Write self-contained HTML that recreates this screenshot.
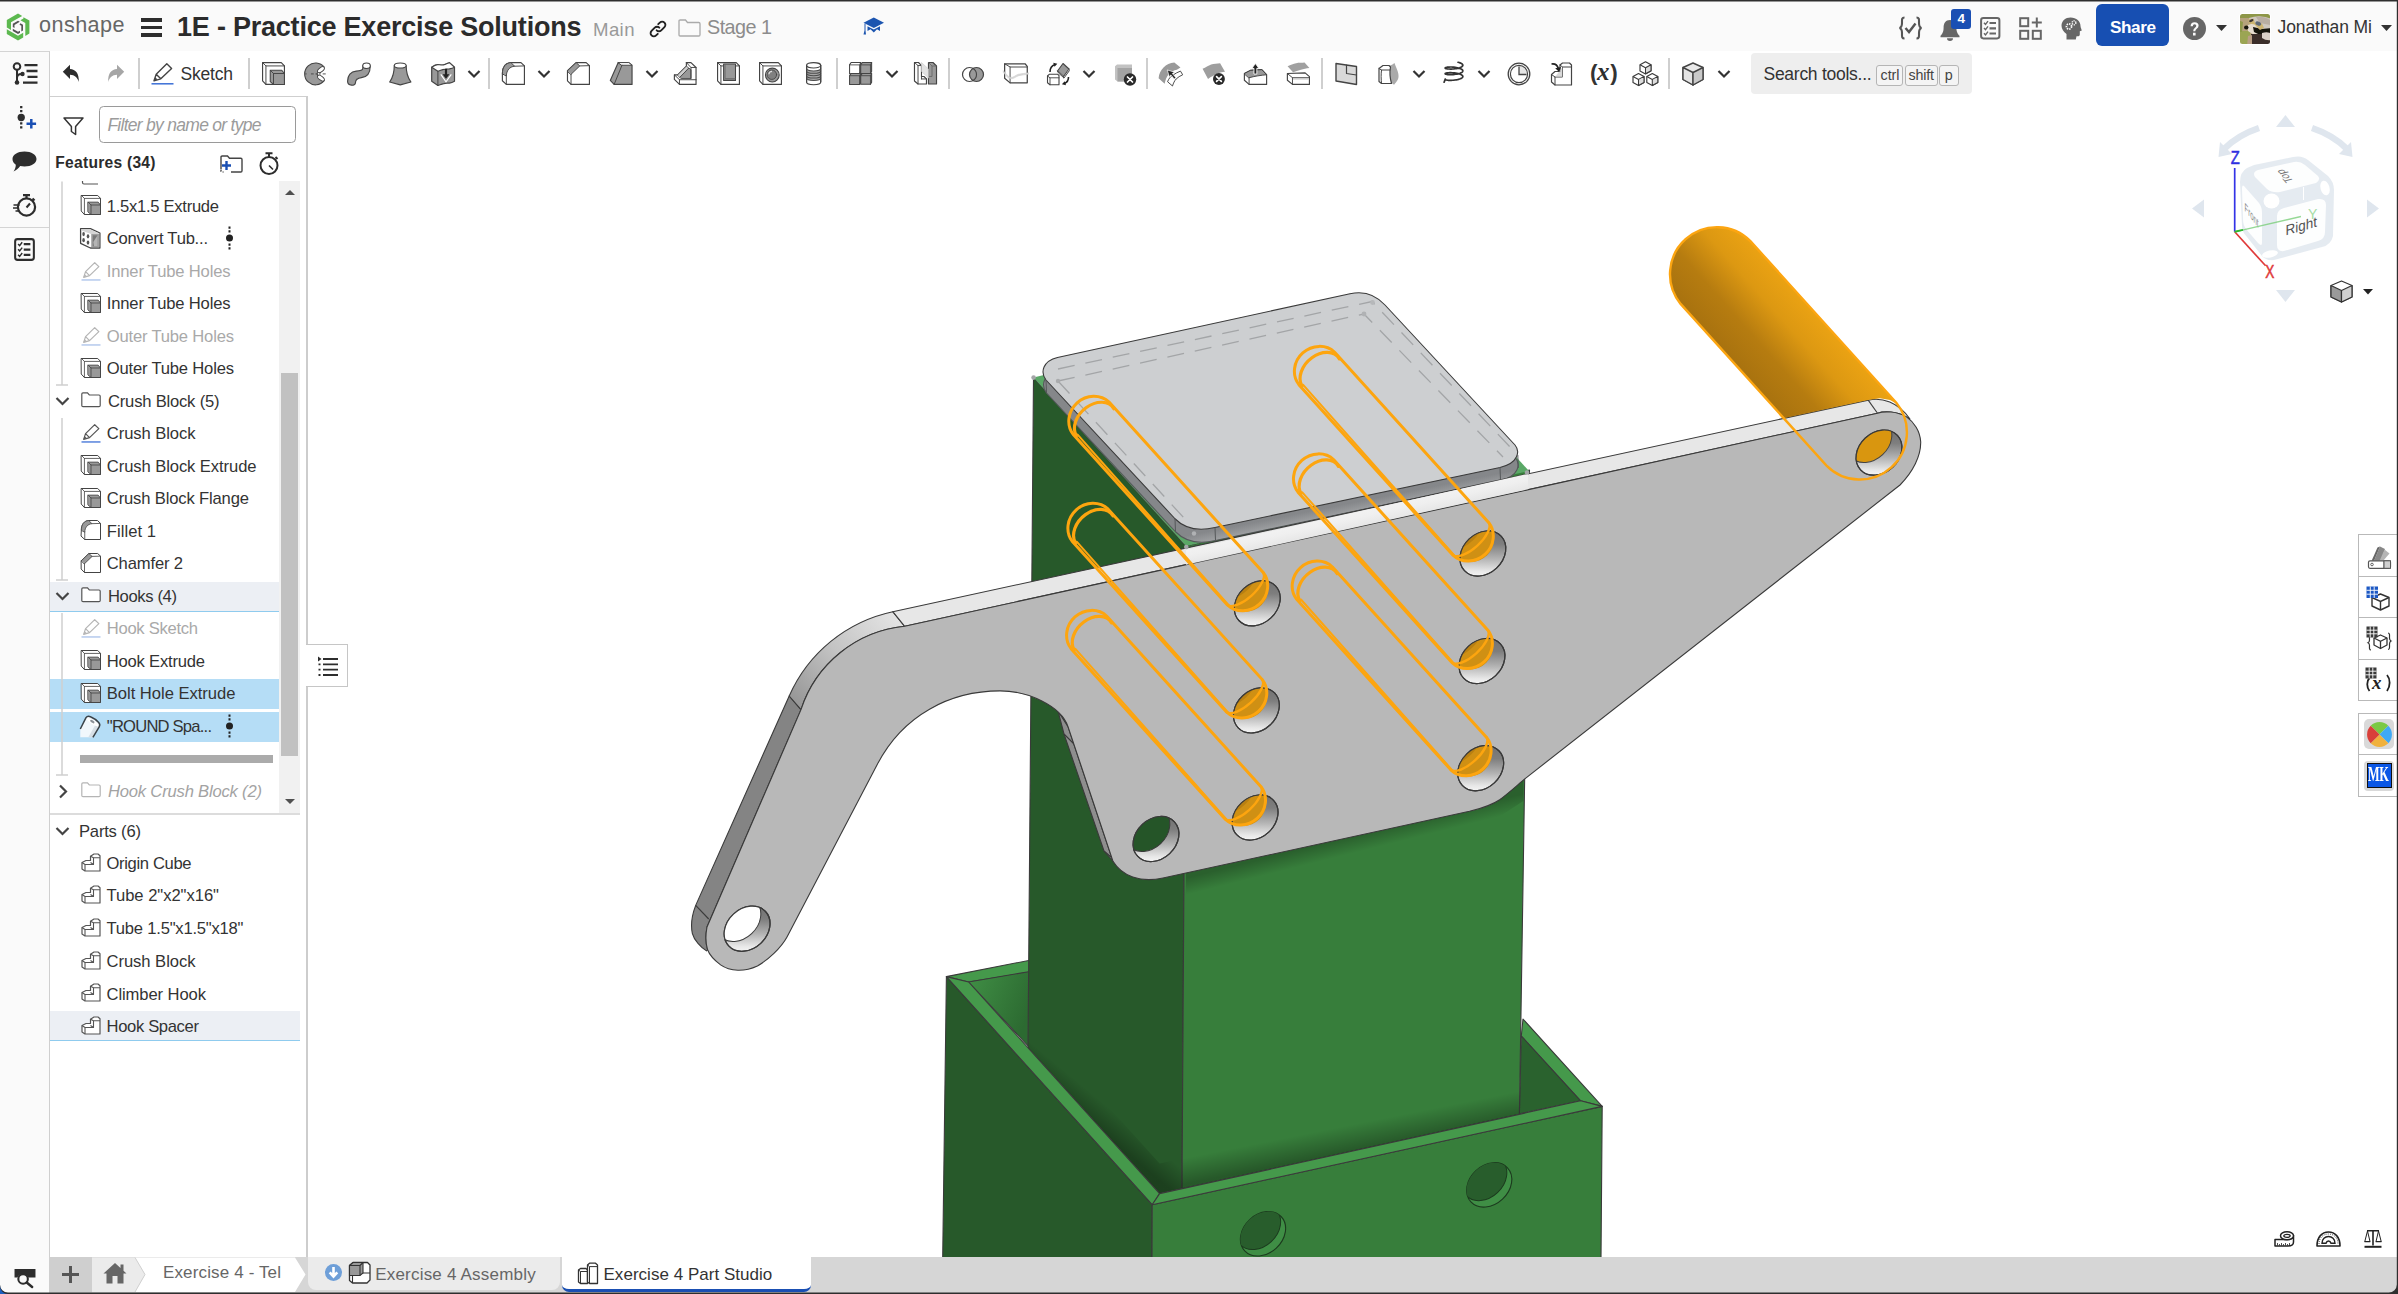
<!DOCTYPE html>
<html lang="en"><head><meta charset="utf-8"><title>1E - Practice Exercise Solutions | Exercise 4 Part Studio</title>
<style>
html,body{margin:0;padding:0}
body{width:2398px;height:1294px;overflow:hidden;background:#fff;position:relative;font-family:"Liberation Sans",sans-serif;color:#333}
.abs{position:absolute}
#hdr{left:0;top:0;width:2398px;height:51px;background:#fafafa}
#rail{left:0;top:51px;width:49px;height:1243px;background:#fafafa;border-right:1.5px solid #cfcfcf;border-top:1.5px solid #d4d4d4;box-sizing:content-box}
#tabbar{left:50px;top:1256.5px;width:2348px;height:36.5px;background:#d6d6d6}
#panel{left:50px;top:96px;width:255.5px;height:1160px;border-top:1.5px solid #cfcfcf;border-right:2px solid #cdcdcd;background:#fff}
#frame{left:0;top:0;width:2398px;height:1294px;pointer-events:none}
svg{position:absolute;left:0;top:0;overflow:visible}

.t{position:absolute;white-space:nowrap;display:block}
.ic{position:absolute;overflow:visible}
.box{position:absolute;box-sizing:border-box}
</style></head><body>
<svg id="model" width="2398" height="1294" viewBox="0 0 2398 1294">
<defs>
<linearGradient id="gcyl" gradientUnits="userSpaceOnUse" x1="1682" y1="305" x2="1752" y2="243"><stop offset="0" stop-color="#a8720f"/><stop offset=".35" stop-color="#b67c10"/><stop offset=".7" stop-color="#dc9812"/><stop offset="1" stop-color="#eaa213"/></linearGradient>
<linearGradient id="ghole" x1="1" y1="0.25" x2="0.15" y2="0.95"><stop offset="0" stop-color="#707070"/><stop offset=".3" stop-color="#7e7e7e"/><stop offset=".6" stop-color="#b4b4b4"/><stop offset=".85" stop-color="#e8e8e8"/><stop offset="1" stop-color="#fbfbfb"/></linearGradient>
<linearGradient id="gside" gradientUnits="userSpaceOnUse" x1="1300" y1="500" x2="1304" y2="520"><stop offset="0" stop-color="#85878a"/><stop offset="1" stop-color="#b9bbbd"/></linearGradient>
<linearGradient id="garc" gradientUnits="userSpaceOnUse" x1="890" y1="615" x2="795" y2="700"><stop offset="0" stop-color="#e2e2e2"/><stop offset=".5" stop-color="#c4c4c4"/><stop offset="1" stop-color="#989898"/></linearGradient>
<linearGradient id="gend" gradientUnits="userSpaceOnUse" x1="1875" y1="402" x2="1915" y2="460"><stop offset="0" stop-color="#ececec"/><stop offset=".5" stop-color="#cfcfcf"/><stop offset="1" stop-color="#9c9c9c"/></linearGradient>
<linearGradient id="gstrip" gradientUnits="userSpaceOnUse" x1="1180" y1="548" x2="1184" y2="566"><stop offset="0" stop-color="#f3f3f3"/><stop offset=".5" stop-color="#efefef"/><stop offset="1" stop-color="#e6e6e6"/></linearGradient>
<linearGradient id="ginl" gradientUnits="userSpaceOnUse" x1="968" y1="985" x2="1030" y2="1010"><stop offset="0" stop-color="#3f8d44"/><stop offset="1" stop-color="#2c6a31"/></linearGradient>
<linearGradient id="gao1" gradientUnits="userSpaceOnUse" x1="1100" y1="1100" x2="1085" y2="1118"><stop offset="0" stop-color="#000" stop-opacity="0"/><stop offset="1" stop-color="#000" stop-opacity=".28"/></linearGradient>
<linearGradient id="gao2" gradientUnits="userSpaceOnUse" x1="1350" y1="1125" x2="1355" y2="1150"><stop offset="0" stop-color="#000" stop-opacity="0"/><stop offset="1" stop-color="#000" stop-opacity=".3"/></linearGradient>
<linearGradient id="gao3" gradientUnits="userSpaceOnUse" x1="1300" y1="870" x2="1295" y2="845"><stop offset="0" stop-color="#000" stop-opacity="0"/><stop offset="1" stop-color="#000" stop-opacity=".25"/></linearGradient>
<linearGradient id="gsh1" gradientUnits="userSpaceOnUse" x1="1330" y1="842" x2="1334" y2="858"><stop offset="0" stop-color="#000" stop-opacity=".24"/><stop offset="1" stop-color="#000" stop-opacity="0"/></linearGradient>
<linearGradient id="gsh2" gradientUnits="userSpaceOnUse" x1="1085" y1="790" x2="1066" y2="797"><stop offset="0" stop-color="#000" stop-opacity=".28"/><stop offset="1" stop-color="#000" stop-opacity="0"/></linearGradient>
</defs>
<g stroke="#3a3a3a" stroke-width="1.1" stroke-linejoin="round">
<polygon points="946.4,976.6 1030.0,960.2 1030.0,972.0 968.6,982.0" fill="#45994b"/>
<polygon points="968.6,982.0 1030.0,971.5 1030.0,1048.0" fill="url(#ginl)"/>
<polygon points="1523.0,1019.0 1602.2,1106.4 1580.6,1100.8 1521.3,1036.0" fill="#45994b"/>
<polygon points="1521.3,1036.0 1580.6,1100.8 1519.4,1113.8" fill="#2a622e"/>
<polygon points="1033.5,377.5 1186.0,546.0 1182.0,1188.7 1159.6,1193.6 1028.0,1047.8" fill="#27592a"/>
<polygon points="1186.0,546.0 1529.5,470.0 1519.4,1114.3 1182.0,1188.7" fill="#377e3b"/>
</g>
<polygon points="1028.0,1017.8 1159.6,1163.6 1182.0,1158.7 1182.0,1188.7 1159.6,1193.6 1028.0,1047.8" fill="url(#gao1)"/>
<polygon points="1182.0,1158.7 1519.6,1084.0 1519.4,1114.3 1182.0,1188.7" fill="url(#gao2)"/>
<g stroke="#3a3a3a" stroke-width="1.1" stroke-linejoin="round">
<polygon points="946.4,976.6 1152.2,1204.7 1152.0,1258.0 942.7,1258.0" fill="#27592a"/>
<polygon points="1152.2,1204.7 1602.2,1106.4 1601.0,1258.0 1152.0,1258.0" fill="#377e3b"/>
<polygon points="946.4,976.6 968.6,982.0 1159.6,1193.6 1152.2,1204.7" fill="#45994b"/>
<polygon points="1152.2,1204.7 1159.6,1193.6 1580.6,1100.8 1602.2,1106.4" fill="#45994b"/>
<clipPath id="oh0"><ellipse cx="1263.0" cy="1233.8" rx="25" ry="19.5" transform="rotate(-43 1263.0 1233.8)"/></clipPath>
<ellipse cx="1263.0" cy="1233.8" rx="25" ry="19.5" transform="rotate(-43 1263.0 1233.8)" fill="#3f8e45" stroke="#1c3a1e" stroke-width="1.1"/>
<g clip-path="url(#oh0)"><ellipse cx="1258.0" cy="1227.3" rx="25" ry="19.5" transform="rotate(-43 1258.0 1227.3)" fill="#285d2c" stroke="#1c3a1e" stroke-width="1"/></g>
<clipPath id="oh1"><ellipse cx="1489.2" cy="1184.9" rx="25" ry="19.5" transform="rotate(-43 1489.2 1184.9)"/></clipPath>
<ellipse cx="1489.2" cy="1184.9" rx="25" ry="19.5" transform="rotate(-43 1489.2 1184.9)" fill="#3f8e45" stroke="#1c3a1e" stroke-width="1.1"/>
<g clip-path="url(#oh1)"><ellipse cx="1484.2" cy="1178.4" rx="25" ry="19.5" transform="rotate(-43 1484.2 1178.4)" fill="#285d2c" stroke="#1c3a1e" stroke-width="1"/></g>
</g>
<polygon points="1186.0,871.0 1469.5,809.3 1499.7,797.7 1523.5,778.0 1523.3,801.0 1476.0,832.0 1186.0,896.0" fill="url(#gsh1)"/>
<g stroke="#3a3a3a" stroke-width="1.1" stroke-linejoin="round">
<polygon points="1033.5,377.5 1186,546 1529,471 1370,297" fill="#5aa866" stroke="none"/>
<path d="M1057.5,357.5 L1350,293.75 C1362,291 1375,294 1385,305 L1515,445 C1520,451 1519,463 1500,467.5 L1215,527.5 C1200,531 1186,530 1175,518.75 L1046,380 C1040,372 1043,361 1057.5,357.5Z" transform="translate(0.5,13)" fill="url(#gside)" stroke="#55585a"/>
<path d="M1057.5,357.5 L1350,293.75 C1362,291 1375,294 1385,305 L1515,445 C1520,451 1519,463 1500,467.5 L1215,527.5 C1200,531 1186,530 1175,518.75 L1046,380 C1040,372 1043,361 1057.5,357.5Z" fill="#cdcfd1"/>
</g>
<g stroke="#55585a" stroke-width="1" fill="none"><path d="M1175,518.75 l.5,13 M1215,527.5 l.5,13 M1500,467.5 l.5,13 M1517.8,455 l.5,13 M1046,380 l.5,13"/></g>
<g stroke="#a3a5a7" stroke-width="1.3" fill="none" stroke-dasharray="17 11"><path d="M1058,381 L1364,314 L1503,457"/><path d="M1058,381 L1184,518"/><path d="M1058,369 L1372,301.5 L1512,449"/></g>
<circle cx="1058" cy="381" r="2.2" fill="#a9abad"/><circle cx="1364" cy="314" r="2.4" fill="#b0b2b4"/><circle cx="1372.5" cy="302.5" r="2.4" fill="#b6b8ba"/>
<g stroke="#3a3a3a" stroke-width="1.1" stroke-linejoin="round">
<polygon points="1058.0,711.0 1064.0,734.0 1104.0,851.0 1116.0,864.5 1113.0,861.3 1068.0,726.6" fill="#8e8e8e"/>
<path d="M1064,734 L1074,744 M1104,851 L1111,857" fill="none"/>
<path d="M789.2,696 L801,709.6 L707,927 C705.5,935 705.5,943 707.6,949.8 L706.5,950.9 C701,947.6 694,940 692.4,933.6 C690.5,925 692,915 695.7,905.4Z" fill="#848484"/>
<path d="M695.7,905.4 L708.7,919" fill="none"/>
<path d="M892.8,611.7 A146.7,146.7 0 0 0 789.2,696 L801,709.6 A121.8,121.8 0 0 1 904.7,626.3Z" fill="url(#garc)"/>
<path d="M892.8,611.7 L1868.2,400.1 C1882,397 1898,402 1910,419 L1906.8,417.1 C1897,411 1884,411 1877.5,413.2 L904.7,626.3Z" fill="#e7e7e7"/>
<path d="M1868.2,400.1 L1877.5,413.2" fill="none"/>
<path d="M904.7,626.3 L1877.5,413.2 C1884,411 1897,411 1906.8,417.1 C1914,422 1920,431 1920.7,441.8 C1921,456 1913,472 1900,485 L1524.5,779.1 C1518,784.5 1509,793 1499.7,799.7 C1491,805.5 1481,808.5 1469.5,811.3 L1163,878 C1140,883 1122,876 1113,861.3 L1068,726.6 C1061,705.7 1028,690.9 1000,690.9 C950,690.9 902.9,715.2 877.5,764 L787,937 C781,948 768,960 757.4,966 C751,969 745,970.5 737.9,970.3 C731,970 725,968 720.6,964.9 C714,960 709.5,955 707.6,949.8 C705.5,943 705.5,935 707,927 L801,709.6 A121.8,121.8 0 0 1 904.7,626.3Z" fill="#b8b8b8"/>
</g>
<polygon points="1186.0,550.1 1528.0,473.9 1528.0,489.2 1186.0,564.7" fill="url(#gstrip)"/>
<g fill="#a4a6a8"><circle cx="1033.6" cy="377.6" r="2.3"/><circle cx="1186.3" cy="547" r="2.3"/><circle cx="1527" cy="472.5" r="2.3"/><circle cx="1194" cy="533.5" r="2.2" fill="#b0b2b4"/></g>
<defs>
<clipPath id="hc0"><ellipse cx="1257.3" cy="603.3" rx="25.2" ry="20" transform="rotate(-43 1257.3 603.3)"/></clipPath>
<clipPath id="hc1"><ellipse cx="1256.4" cy="710.4" rx="25.2" ry="20" transform="rotate(-43 1256.4 710.4)"/></clipPath>
<clipPath id="hc2"><ellipse cx="1255.1" cy="817.5" rx="25.2" ry="20" transform="rotate(-43 1255.1 817.5)"/></clipPath>
<clipPath id="hc3"><ellipse cx="1482.9" cy="553.5" rx="25.2" ry="20" transform="rotate(-43 1482.9 553.5)"/></clipPath>
<clipPath id="hc4"><ellipse cx="1482.0" cy="661.0" rx="25.2" ry="20" transform="rotate(-43 1482.0 661.0)"/></clipPath>
<clipPath id="hc5"><ellipse cx="1480.7" cy="768.2" rx="25.2" ry="20" transform="rotate(-43 1480.7 768.2)"/></clipPath>
<clipPath id="hc6"><ellipse cx="1156.0" cy="839.0" rx="25.2" ry="20" transform="rotate(-43 1156.0 839.0)"/></clipPath>
<clipPath id="hc7"><ellipse cx="747.1" cy="928.7" rx="25.2" ry="20" transform="rotate(-43 747.1 928.7)"/></clipPath>
<clipPath id="hc8"><ellipse cx="1879.0" cy="452.6" rx="25.2" ry="20" transform="rotate(-43 1879.0 452.6)"/></clipPath>
</defs>
<g><ellipse cx="1257.3" cy="603.3" rx="25.2" ry="20" transform="rotate(-43 1257.3 603.3)" fill="url(#ghole)" stroke="#3a3a3a" stroke-width="1.2"/><g clip-path="url(#hc0)"><circle cx="1245.3" cy="588.7" r="23" fill="#cf9014"/><ellipse cx="1238.3" cy="580.7" rx="24" ry="13" transform="rotate(-43 1238.3 580.7)" fill="#b98012"/></g><ellipse cx="1257.3" cy="603.3" rx="25.2" ry="20" transform="rotate(-43 1257.3 603.3)" fill="none" stroke="#3a3a3a" stroke-width="1.2"/></g>
<g><ellipse cx="1256.4" cy="710.4" rx="25.2" ry="20" transform="rotate(-43 1256.4 710.4)" fill="url(#ghole)" stroke="#3a3a3a" stroke-width="1.2"/><g clip-path="url(#hc1)"><circle cx="1244.4" cy="695.8" r="23" fill="#cf9014"/><ellipse cx="1237.4" cy="687.8" rx="24" ry="13" transform="rotate(-43 1237.4 687.8)" fill="#b98012"/></g><ellipse cx="1256.4" cy="710.4" rx="25.2" ry="20" transform="rotate(-43 1256.4 710.4)" fill="none" stroke="#3a3a3a" stroke-width="1.2"/></g>
<g><ellipse cx="1255.1" cy="817.5" rx="25.2" ry="20" transform="rotate(-43 1255.1 817.5)" fill="url(#ghole)" stroke="#3a3a3a" stroke-width="1.2"/><g clip-path="url(#hc2)"><circle cx="1243.1" cy="802.9" r="23" fill="#cf9014"/><ellipse cx="1236.1" cy="794.9" rx="24" ry="13" transform="rotate(-43 1236.1 794.9)" fill="#b98012"/></g><ellipse cx="1255.1" cy="817.5" rx="25.2" ry="20" transform="rotate(-43 1255.1 817.5)" fill="none" stroke="#3a3a3a" stroke-width="1.2"/></g>
<g><ellipse cx="1482.9" cy="553.5" rx="25.2" ry="20" transform="rotate(-43 1482.9 553.5)" fill="url(#ghole)" stroke="#3a3a3a" stroke-width="1.2"/><g clip-path="url(#hc3)"><circle cx="1470.9" cy="538.9" r="23" fill="#cf9014"/><ellipse cx="1463.9" cy="530.9" rx="24" ry="13" transform="rotate(-43 1463.9 530.9)" fill="#b98012"/></g><ellipse cx="1482.9" cy="553.5" rx="25.2" ry="20" transform="rotate(-43 1482.9 553.5)" fill="none" stroke="#3a3a3a" stroke-width="1.2"/></g>
<g><ellipse cx="1482.0" cy="661.0" rx="25.2" ry="20" transform="rotate(-43 1482.0 661.0)" fill="url(#ghole)" stroke="#3a3a3a" stroke-width="1.2"/><g clip-path="url(#hc4)"><circle cx="1470.0" cy="646.4" r="23" fill="#cf9014"/><ellipse cx="1463.0" cy="638.4" rx="24" ry="13" transform="rotate(-43 1463.0 638.4)" fill="#b98012"/></g><ellipse cx="1482.0" cy="661.0" rx="25.2" ry="20" transform="rotate(-43 1482.0 661.0)" fill="none" stroke="#3a3a3a" stroke-width="1.2"/></g>
<g><ellipse cx="1480.7" cy="768.2" rx="25.2" ry="20" transform="rotate(-43 1480.7 768.2)" fill="url(#ghole)" stroke="#3a3a3a" stroke-width="1.2"/><g clip-path="url(#hc5)"><circle cx="1468.7" cy="753.6" r="23" fill="#cf9014"/><ellipse cx="1461.7" cy="745.6" rx="24" ry="13" transform="rotate(-43 1461.7 745.6)" fill="#b98012"/></g><ellipse cx="1480.7" cy="768.2" rx="25.2" ry="20" transform="rotate(-43 1480.7 768.2)" fill="none" stroke="#3a3a3a" stroke-width="1.2"/></g>
<g><ellipse cx="1156.0" cy="839.0" rx="25.2" ry="20" transform="rotate(-43 1156.0 839.0)" fill="url(#ghole)" stroke="#3a3a3a" stroke-width="1.2"/><g clip-path="url(#hc6)"><ellipse cx="1147" cy="829" rx="25" ry="20" transform="rotate(-43 1147 829)" fill="#255528" stroke="#3a3a3a" stroke-width="1"/></g><ellipse cx="1156.0" cy="839.0" rx="25.2" ry="20" transform="rotate(-43 1156.0 839.0)" fill="none" stroke="#3a3a3a" stroke-width="1.2"/></g>
<g><ellipse cx="747.1" cy="928.7" rx="25.2" ry="20" transform="rotate(-43 747.1 928.7)" fill="url(#ghole)" stroke="#3a3a3a" stroke-width="1.2"/><g clip-path="url(#hc7)"><ellipse cx="738" cy="919" rx="25" ry="20" transform="rotate(-43 738 919)" fill="#fff" stroke="#3a3a3a" stroke-width="1"/></g><ellipse cx="747.1" cy="928.7" rx="25.2" ry="20" transform="rotate(-43 747.1 928.7)" fill="none" stroke="#3a3a3a" stroke-width="1.2"/></g>
<g><ellipse cx="1879.0" cy="452.6" rx="25.2" ry="20" transform="rotate(-43 1879.0 452.6)" fill="url(#ghole)" stroke="#3a3a3a" stroke-width="1.2"/><g clip-path="url(#hc8)"><ellipse cx="1869" cy="440" rx="25" ry="20" transform="rotate(-43 1869 440)" fill="#d9960f" stroke="#444" stroke-width="1"/></g><ellipse cx="1879.0" cy="452.6" rx="25.2" ry="20" transform="rotate(-43 1879.0 452.6)" fill="none" stroke="#3a3a3a" stroke-width="1.2"/></g>
<defs><clipPath id="cylc"><polygon points="1500.0,100.0 2100.0,100.0 2100.0,404.0 1897.0,404.0 1890.0,400.0 1880.0,398.2 1868.2,400.1 1500.0,479.5"/></clipPath></defs>
<path d="M1680.6,303.9 A47.0,47.0 0 0 1 1750.4,241.1 L1896.3,402.8 L1826.5,465.6 Z" fill="url(#gcyl)" clip-path="url(#cylc)"/>
<path d="M1680.6,303.9 A47.0,47.0 0 0 1 1750.4,241.1 L1896.3,402.8 A47.0,47.0 0 0 1 1826.5,465.6 Z" fill="none" stroke="#fca511" stroke-width="2.4"/>
<g fill="none" stroke="#fda50f" stroke-linecap="round">
<path d="M1073.3,434.5 A22.5,24.2 47.9 0 1 1109.1,402.1 L1263.2,572.5 A22.5,24.2 47.9 0 1 1227.4,604.9 Z" stroke-width="3"/>
<path d="M1076.4,435.8 A17.0,23.2 47.9 0 1 1113.8,408.7" stroke-width="3.2"/>
<path d="M1077.6,434.6 L1229.3,605.9" stroke-width="2"/>
<path d="M1263.2,572.5 A10.0,24.2 47.9 0 1 1227.4,604.9" stroke-width="2.4"/>
<path d="M1072.4,541.6 A22.5,24.2 47.9 0 1 1108.2,509.2 L1262.3,679.6 A22.5,24.2 47.9 0 1 1226.5,712.0 Z" stroke-width="3"/>
<path d="M1075.5,542.9 A17.0,23.2 47.9 0 1 1112.9,515.8" stroke-width="3.2"/>
<path d="M1076.7,541.7 L1228.4,713.0" stroke-width="2"/>
<path d="M1262.3,679.6 A10.0,24.2 47.9 0 1 1226.5,712.0" stroke-width="2.4"/>
<path d="M1071.1,648.7 A22.5,24.2 47.9 0 1 1106.9,616.3 L1261.0,786.7 A22.5,24.2 47.9 0 1 1225.2,819.1 Z" stroke-width="3"/>
<path d="M1074.2,650.0 A17.0,23.2 47.9 0 1 1111.6,622.9" stroke-width="3.2"/>
<path d="M1075.4,648.8 L1227.1,820.1" stroke-width="2"/>
<path d="M1261.0,786.7 A10.0,24.2 47.9 0 1 1225.2,819.1" stroke-width="2.4"/>
<path d="M1298.9,384.7 A22.5,24.2 47.9 0 1 1334.7,352.3 L1488.8,522.7 A22.5,24.2 47.9 0 1 1453.0,555.1 Z" stroke-width="3"/>
<path d="M1302.0,386.0 A17.0,23.2 47.9 0 1 1339.4,358.9" stroke-width="3.2"/>
<path d="M1303.2,384.8 L1454.9,556.1" stroke-width="2"/>
<path d="M1488.8,522.7 A10.0,24.2 47.9 0 1 1453.0,555.1" stroke-width="2.4"/>
<path d="M1298.0,492.2 A22.5,24.2 47.9 0 1 1333.8,459.8 L1487.9,630.2 A22.5,24.2 47.9 0 1 1452.1,662.6 Z" stroke-width="3"/>
<path d="M1301.1,493.5 A17.0,23.2 47.9 0 1 1338.5,466.4" stroke-width="3.2"/>
<path d="M1302.3,492.3 L1454.0,663.6" stroke-width="2"/>
<path d="M1487.9,630.2 A10.0,24.2 47.9 0 1 1452.1,662.6" stroke-width="2.4"/>
<path d="M1296.7,599.4 A22.5,24.2 47.9 0 1 1332.5,567.0 L1486.6,737.4 A22.5,24.2 47.9 0 1 1450.8,769.8 Z" stroke-width="3"/>
<path d="M1299.8,600.7 A17.0,23.2 47.9 0 1 1337.2,573.6" stroke-width="3.2"/>
<path d="M1301.0,599.5 L1452.7,770.8" stroke-width="2"/>
<path d="M1486.6,737.4 A10.0,24.2 47.9 0 1 1450.8,769.8" stroke-width="2.4"/>
</g>
</svg>
<div id="hdr" class="abs"></div>
<div id="rail" class="abs"></div>
<div id="panel" class="abs"></div>
<div id="tabbar" class="abs"></div>
<svg class="ic" style="left:4.9px;top:12.5px" width="26.0" height="28.0" viewBox="0 0 24 28" ><g fill="#5cb84f"><path d="M12,0.5 L16.2,2.9 L5,9.3 L5,17 L0.8,14.6 L0.8,7Z"/><path d="M17.4,4.2 L23.4,7.6 L23.4,20.6 L19.3,23 L19.3,10 L14.4,7.2 L17.4,5.5Z"/><path d="M0.8,16.2 L12,22.7 L17.2,19.7 L17.2,24.4 L12,27.4 L0.8,21Z"/></g><g fill="#555"><path d="M12,7.7 L13.8,8.8 L8.5,11.9 L8.5,15 L6.8,14 L6.8,10.8Z"/><path d="M14.4,10.2 L17,11.7 L17,17.6 L15.3,18.6 L15.3,12.8 L13.5,11.8Z"/><path d="M6.8,15.8 L12,18.8 L14,17.7 L14,19.8 L12,21 L6.8,18Z"/></g></svg>
<span id="t1" class="t" style="left:39.0px;top:10.8px;font-size:21.6px;line-height:27px;color:#666;font-weight:normal;font-style:normal;letter-spacing:0.440px;">onshape</span>
<div class="box" style="left:141px;top:18.3px;width:21px;height:3.6px;background:#2d2d2d"></div><div class="box" style="left:141px;top:25.8px;width:21px;height:3.6px;background:#2d2d2d"></div><div class="box" style="left:141px;top:33.3px;width:21px;height:3.6px;background:#2d2d2d"></div>
<span id="t2" class="t" style="left:177.0px;top:9.6px;font-size:27.0px;line-height:34px;color:#2b2b2b;font-weight:bold;font-style:normal;letter-spacing:-0.216px;">1E - Practice Exercise Solutions</span>
<span id="t3" class="t" style="left:593.0px;top:17.9px;font-size:18.6px;line-height:23px;color:#999;font-weight:normal;font-style:normal;letter-spacing:0.396px;">Main</span>
<svg class="ic" style="left:648.5px;top:19.5px" width="18.0" height="18.0" viewBox="0 0 24 24" ><g fill="none" stroke="#222" stroke-width="2.5" stroke-linecap="round"><path d="M10.2,13.8 a4.3,4.3 0 0 0 6.1,0 l4.3,-4.3 a4.3,4.3 0 0 0 -6.1,-6.1 l-2.2,2.2"/><path d="M13.8,10.2 a4.3,4.3 0 0 0 -6.1,0 l-4.3,4.3 a4.3,4.3 0 0 0 6.1,6.1 l2.2,-2.2"/></g></svg>
<svg class="ic" style="left:677.5px;top:18.5px" width="23.0" height="18.0" viewBox="0 0 23 18" ><path d="M1,2.2 Q1,1 2.2,1 L7.5,1 L9.5,3.5 L20.8,3.5 Q22,3.5 22,4.7 L22,15.8 Q22,17 20.8,17 L2.2,17 Q1,17 1,15.8Z" fill="none" stroke="#aaa" stroke-width="1.3"/></svg>
<span id="t4" class="t" style="left:707.0px;top:14.8px;font-size:19.8px;line-height:25px;color:#8c8c8c;font-weight:normal;font-style:normal;letter-spacing:-0.534px;">Stage 1</span>
<svg class="ic" style="left:862.5px;top:17.0px" width="21.0" height="18.0" viewBox="0 0 21 18" ><path d="M10.8,0.5 L21,5.8 L10.8,11 L0.5,5.8Z" fill="#1c55b0"/><path d="M4.5,9.3 L10.8,12.6 L17,9.3 V14 L14,12.2 L10.8,15.5 L7.5,12.2 L4.5,14Z" fill="#1c55b0"/><path d="M1.5,6.5 V13.5 L0.5,17.5 H3 L2.5,13.5 V7Z" fill="#1c55b0"/></svg>
<svg class="ic" style="left:1898.0px;top:16.0px" width="25.0" height="24.0" viewBox="0 0 25 24" ><path d="M6.5,1.5 C3.5,1.5 4,4 4,7 C4,10 3.5,11.5 1.5,12 C3.5,12.5 4,14 4,17 C4,20 3.5,22.5 6.5,22.5 M18.5,1.5 C21.5,1.5 21,4 21,7 C21,10 21.5,11.5 23.5,12 C21.5,12.5 21,14 21,17 C21,20 21.5,22.5 18.5,22.5" fill="none" stroke="#555" stroke-width="2.1"/><path d="M7.5,12 L11,16 L17.5,7.5" fill="none" stroke="#555" stroke-width="2.4"/></svg>
<svg class="ic" style="left:1940.0px;top:18.5px" width="20.0" height="22.0" viewBox="0 0 20 22" ><path d="M10,1 C5.5,1 3.6,4.5 3.6,8.5 C3.6,13.5 2,15 0.5,16.8 V18.2 H19.5 V16.8 C18,15 16.4,13.5 16.4,8.5 C16.4,4.5 14.5,1 10,1Z M7,19.3 A3,2.6 0 0 0 13,19.3Z" fill="#666"/></svg>
<div class="box" style="left:1951px;top:9px;width:20px;height:19.6px;background:#1a4fb3;border-radius:3px"></div>
<span id="t5" class="t" style="left:1957.5px;top:10.3px;font-size:13.5px;line-height:17px;color:#fff;font-weight:bold;font-style:normal;letter-spacing:0.000px;">4</span>
<svg class="ic" style="left:1980.0px;top:17.4px" width="20.5" height="22.5" viewBox="0 0 20.5 22.5" ><rect x="1.1" y="1.1" width="18.3" height="20.3" rx="2.3" fill="none" stroke="#666" stroke-width="2"/><path d="M9.5,6 H16 M9.5,11.3 H16 M9.5,16.5 H16" stroke="#666" stroke-width="2.2"/><path d="M4,5.8 L5.5,7.5 L8,4.2 M4,11 L5.5,12.7 L8,9.4 M4,16.3 L5.5,18 L8,14.7" fill="none" stroke="#666" stroke-width="1.4"/></svg>
<svg class="ic" style="left:2019.0px;top:17.0px" width="23.0" height="23.0" viewBox="0 0 23 23" ><g fill="none" stroke="#666" stroke-width="2"><rect x="1.2" y="1.2" width="8" height="8"/><rect x="1.2" y="13.8" width="8" height="8"/><rect x="13.8" y="13.8" width="8" height="8"/><path d="M17.8,0.5 V10.5 M12.8,5.5 H22.8"/></g></svg>
<svg class="ic" style="left:2060.5px;top:17.0px" width="21.0" height="23.0" viewBox="0 0 21 23" ><path d="M9.5,0.5 C15.5,0.5 19.5,4.5 19.5,9 C19.5,10.5 20.5,12 20.8,13.5 L18.8,14.3 V17.5 C18.8,19 17.5,19.5 15.5,19.3 L14.8,22.5 H5.5 L5.5,17 C2.5,15 0.5,12 0.5,8.8 C0.5,4 4.5,0.5 9.5,0.5Z" fill="#666"/><circle cx="8" cy="9.5" r="2.6" fill="none" stroke="#fafafa" stroke-width="1.7" stroke-dasharray="1.4 1"/><circle cx="13" cy="5.8" r="1.9" fill="none" stroke="#fafafa" stroke-width="1.4" stroke-dasharray="1.1 .8"/></svg>
<div class="box" style="left:2096px;top:4px;width:73px;height:42px;background:#174fb2;border-radius:6px"></div>
<span id="t6" class="t" style="left:2110.0px;top:15.6px;font-size:17.2px;line-height:22px;color:#fff;font-weight:bold;font-style:normal;letter-spacing:-0.445px;">Share</span>
<svg class="ic" style="left:2183.0px;top:17.0px" width="23.0" height="23.0" viewBox="0 0 23 23" ><circle cx="11.5" cy="11.5" r="11.5" fill="#666"/><path d="M7.6,9.2 Q7.6,5.2 11.6,5.2 Q15.6,5.2 15.6,8.7 Q15.6,10.8 13.5,12 Q12.3,12.8 12.3,14.2 L10.2,14.2 Q10.2,11.8 12,10.7 Q13.3,9.9 13.3,8.8 Q13.3,7.3 11.6,7.3 Q9.9,7.3 9.8,9.2Z M10,15.8 h2.6 v2.6 h-2.6Z" fill="#fafafa"/></svg>
<svg class="ic" style="left:2215.5px;top:25px" width="11" height="6" viewBox="0 0 11 6"><path d="M0,0 H11 L5.5,6Z" fill="#333"/></svg>
<div class="box" style="left:2239px;top:13px;width:32px;height:32px;background:#fff;border-radius:4px"></div>
<svg class="ic" style="left:2240px;top:14px" width="30" height="30" viewBox="0 0 30 30"><defs><clipPath id="avc"><rect width="30" height="30" rx="2.5"/></clipPath><filter id="avb" x="-10%" y="-10%" width="120%" height="120%"><feGaussianBlur stdDeviation="0.7"/></filter></defs><g clip-path="url(#avc)"><g filter="url(#avb)"><rect x="-2" y="-2" width="34" height="34" fill="#b5a27c"/><rect x="-2" y="-2" width="34" height="6" fill="#8d9647"/><path d="M-2,17 L10,17 L11,32 L-2,32Z" fill="#9ba553"/><path d="M-2,6 L3,8 L2,18 L-2,18Z" fill="#8f9a4c"/><path d="M9,4 Q20,0 32,5 L32,16 L20,16 L12,12Z" fill="#cfc8bf"/><path d="M16,3 Q24,2 30,6 L30,11 L20,9Z" fill="#b9aea2"/><path d="M8,11 L14,9 L20,14 L22,20 L14,21 L8,17Z" fill="#e6ddd0"/><ellipse cx="6.3" cy="13.5" rx="2.2" ry="2" fill="#15120f"/><path d="M13,13 L22,15 L32,14 L32,19 L20,21 L14,18Z" fill="#17130f"/><path d="M8.5,5.5 L13.5,4.5 L15,9 L22,9.5 L24,14 L20,16 L14.5,10.5 L9,9.5Z" fill="#cdb571"/><ellipse cx="11.3" cy="6.6" rx="2.3" ry="1.3" transform="rotate(-20 11.3 6.6)" fill="#3a3433"/><ellipse cx="18.3" cy="9.5" rx="3" ry="2" transform="rotate(25 18.3 9.5)" fill="#5f6a78"/><path d="M11,20 L22,20 L32,24 L32,32 L11,32Z" fill="#3b2f29"/><path d="M22,19 Q28,17 32,20 L32,26 Q26,27 22,24Z" fill="#d9d0c7"/><path d="M8,22 L12,21 L12,32 L7,32Z" fill="#b99f85"/></g></g></svg>
<span id="t7" class="t" style="left:2277.5px;top:16.4px;font-size:17.5px;line-height:22px;color:#333;font-weight:normal;font-style:normal;letter-spacing:-0.084px;">Jonathan Mi</span>
<svg class="ic" style="left:2380.5px;top:24.5px" width="11" height="6" viewBox="0 0 11 6"><path d="M0,0 H11 L5.5,6Z" fill="#333"/></svg>
<svg class="ic" style="left:62.0px;top:64.0px" width="18.0" height="19.5" viewBox="0 0 18 18" preserveAspectRatio="none"><path d="M0.8,7.2 L8,0.8 L8,4.6 C13.5,4.8 17.2,8.5 16.8,16.6 C15.4,12.6 12.8,10.2 8,10 L8,13.8Z" fill="#2d2d2d"/></svg>
<svg class="ic" style="left:106.7px;top:64.0px" width="18.0" height="19.5" viewBox="0 0 18 18" preserveAspectRatio="none"><path d="M17.2,7.2 L10,0.8 L10,4.6 C4.5,4.8 0.8,8.5 1.2,16.6 C2.6,12.6 5.2,10.2 10,10 L10,13.8Z" fill="#a6a6a6"/></svg>
<div class="box" style="left:137.7px;top:57.5px;width:2px;height:31.5px;background:#cfcfcf"></div>
<svg class="ic" style="left:151.0px;top:62.7px" width="23.0" height="22.0" viewBox="0 0 23 22" ><path d="M3,17.8 L5.2,11.2 L15.8,0.8 L20.6,5.4 L9.8,15.8Z M5.2,11.2 L9.8,15.8" fill="#fff" stroke="#444" stroke-width="1.4" stroke-linejoin="round"/><path d="M3,17.8 L4.2,14.3 L6.6,16.6Z" fill="#444"/><path d="M0.5,20.8 H22.5" stroke="#3b6fd6" stroke-width="1.5"/></svg>
<span id="t8" class="t" style="left:180.4px;top:63.3px;font-size:17.5px;line-height:22px;color:#333;font-weight:normal;font-style:normal;letter-spacing:-0.180px;">Sketch</span>
<div class="box" style="left:248.2px;top:57.5px;width:2px;height:31.5px;background:#cfcfcf"></div>
<svg class="ic" style="left:261.8px;top:62.0px" width="23.0" height="23.0" viewBox="0 0 24 24" ><path d="M0.6,0.6 H20.1 L23.4,4.1 V23.4 H4.1 L0.6,19.6Z" fill="#fff" stroke="#444" stroke-width="1.2" stroke-linejoin="round" stroke-linecap="round"/><path d="M0.6,0.6 L4.1,4.1 H23.4 M4.1,4.1 V23.4" fill="none" stroke="#444" stroke-width="1" stroke-linejoin="round" stroke-linecap="round"/><path d="M8.6,8.6 H20.6 L23.4,12 V23.4 H12 L8.6,20.5Z" fill="#999" stroke="#444" stroke-width="1.1" stroke-linejoin="round" stroke-linecap="round"/><path d="M8.6,8.6 L12,12 H23.4 M12,12 V23.4" fill="none" stroke="#444" stroke-width="1" stroke-linejoin="round" stroke-linecap="round"/></svg>
<svg class="ic" style="left:305.3px;top:62.2px" width="22.0" height="23.0" viewBox="0 0 24 24" ><path d="M20.9,5.1 A11.9,11.9 0 1 0 20.9,19.8 L13.9,14.3 A3,3 0 0 1 13.9,10.6Z" fill="#999" stroke="#444" stroke-width="1.2" stroke-linejoin="round" stroke-linecap="round"/><ellipse cx="17.4" cy="7.85" rx="4.4" ry="2.2" transform="rotate(-38.2 17.4 7.85)" fill="#fff" stroke="#444" stroke-width="1" stroke-linejoin="round" stroke-linecap="round"/><ellipse cx="17.4" cy="17.05" rx="4.4" ry="2.2" transform="rotate(38.2 17.4 17.05)" fill="#fff" stroke="#444" stroke-width="1" stroke-linejoin="round" stroke-linecap="round"/><path d="M0.3,12.45 H1.8 M6.5,12.45 H9.5 M11.5,12.45 H13.5 M15.3,12.45 H17.3 M19.3,12.45 H22.6" stroke="#444" stroke-width="1" fill="none"/></svg>
<svg class="ic" style="left:347.2px;top:61.5px" width="24.0" height="24.5" viewBox="0 0 25 25" ><path d="M16.5,3.5 V6.3 C16.5,8.5 13,9.1 9.5,9.2 C4,9.6 0.6,14 0.6,19.8 C0.6,25 8.8,25 8.8,21.3 C8.8,17.5 11.5,16.5 15,16 C21,15.3 24.2,11 24.2,3.8" fill="#999" stroke="#444" stroke-width="1.2" stroke-linejoin="round" stroke-linecap="round"/><ellipse cx="20.35" cy="3.7" rx="3.9" ry="2.9" fill="#fff" stroke="#444" stroke-width="1.1" stroke-linejoin="round" stroke-linecap="round"/></svg>
<svg class="ic" style="left:389.0px;top:61.8px" width="23.0" height="23.5" viewBox="0 0 24 24" ><path d="M5.5,3.4 C5.5,10 4,16 0.7,20.6 L11.7,23.6 L22.9,20.6 C19.5,16 17.9,10 17.9,3.4Z" fill="#999" stroke="#444" stroke-width="1.2" stroke-linejoin="round" stroke-linecap="round"/><ellipse cx="11.7" cy="3.4" rx="6.2" ry="2.7" fill="#fff" stroke="#444" stroke-width="1.1" stroke-linejoin="round" stroke-linecap="round"/></svg>
<svg class="ic" style="left:431.3px;top:61.5px" width="24.0" height="24.0" viewBox="0 0 24 24" ><path d="M0.7,5.3 C3,3.5 5,2.5 6.9,2.6 C9,2.8 11,3.2 12.6,2.9 C15,2.3 17,1.2 18.4,0.7 L23.5,5.3 V19.2 C21.5,20.3 20,20.8 18.4,21.1 C16,21.3 14.5,21 12.6,21.6 C10.5,22.2 8.5,23 6.9,23.5 L0.7,19.2Z" fill="#999" stroke="#444" stroke-width="1.2" stroke-linejoin="round" stroke-linecap="round"/><path d="M0.7,5.3 C3,3.5 5,2.5 6.9,2.6 C9,2.8 11,3.2 12.6,2.9 C15,2.3 17,1.2 18.4,0.7 L23.5,5.3 C21.5,6.3 20,6.6 18.4,6.9 C16,7.1 14.5,6.8 12.6,7.4 C10.5,8 8.5,8.8 6.9,9.3Z" fill="#fff" stroke="#444" stroke-width="1.1" stroke-linejoin="round" stroke-linecap="round"/><path d="M6.9,9.3 V23.5" fill="none" stroke="#444" stroke-width="1" stroke-linejoin="round" stroke-linecap="round"/><path d="M15,16.8 L11.6,12.3 H13.9 V6.8 H16.1 V12.3 H18.4Z" fill="#222"/><path d="M9.8,12.4 L15,19.8 L20.3,12.4" fill="none" stroke="#fff" stroke-width="1.1"/></svg>
<svg class="ic" style="left:467.0px;top:68.5px" width="14.0" height="10.0" viewBox="0 0 14 10" ><path d="M1.5,2 L7,7.5 L12.5,2" fill="none" stroke="#333" stroke-width="2.2" stroke-linecap="butt" stroke-linejoin="miter"/></svg>
<div class="box" style="left:488.2px;top:57.5px;width:2px;height:31.5px;background:#cfcfcf"></div>
<svg class="ic" style="left:502.0px;top:62.0px" width="23.0" height="23.0" viewBox="0 0 24 24" ><path d="M0.4,12 C0.4,5 4,1 9.3,0.6 H19.8 L23.4,4.1 V23.4 H4.5 L0.4,19.6Z" fill="#fff" stroke="#444" stroke-width="1.2" stroke-linejoin="round" stroke-linecap="round"/><path d="M0.4,12 C0.4,5 4,1 9.3,0.6 L13.1,4.4 C8,5 4.8,8.5 4.5,14.2Z" fill="#999" stroke="#444" stroke-width="1" stroke-linejoin="round" stroke-linecap="round"/><path d="M13.1,4.4 L23.4,4.1 M4.5,14.2 V23.4" fill="none" stroke="#444" stroke-width="1" stroke-linejoin="round" stroke-linecap="round"/></svg>
<svg class="ic" style="left:537.0px;top:68.5px" width="14.0" height="10.0" viewBox="0 0 14 10" ><path d="M1.5,2 L7,7.5 L12.5,2" fill="none" stroke="#333" stroke-width="2.2" stroke-linecap="butt" stroke-linejoin="miter"/></svg>
<svg class="ic" style="left:567.0px;top:62.0px" width="23.0" height="23.0" viewBox="0 0 24 24" ><path d="M0.5,9.1 L9.5,0.6 H20 L23.4,3.8 V23.4 H4.2 L0.5,19.6Z" fill="#fff" stroke="#444" stroke-width="1.2" stroke-linejoin="round" stroke-linecap="round"/><path d="M0.5,9.1 L9.5,0.6 L13.3,4.1 L4.2,12.9Z" fill="#999" stroke="#444" stroke-width="1" stroke-linejoin="round" stroke-linecap="round"/><path d="M13.3,4.1 L23.4,3.8 M4.2,12.9 V23.4" fill="none" stroke="#444" stroke-width="1" stroke-linejoin="round" stroke-linecap="round"/></svg>
<svg class="ic" style="left:609.5px;top:62.0px" width="23.0" height="23.0" viewBox="0 0 24 24" ><path d="M8.6,0.6 H19.6 L23,3.4 V23.4 H4.3 L0.3,19.2Z" fill="#999" stroke="#444" stroke-width="1.2" stroke-linejoin="round" stroke-linecap="round"/><path d="M8.6,0.6 H19.6 L23,3.4 H12.5Z" fill="#fff" stroke="#444" stroke-width="1" stroke-linejoin="round" stroke-linecap="round"/><path d="M12.5,3.4 L4.3,23.4" fill="none" stroke="#444" stroke-width="1" stroke-linejoin="round" stroke-linecap="round"/></svg>
<svg class="ic" style="left:645.0px;top:68.5px" width="14.0" height="10.0" viewBox="0 0 14 10" ><path d="M1.5,2 L7,7.5 L12.5,2" fill="none" stroke="#333" stroke-width="2.2" stroke-linecap="butt" stroke-linejoin="miter"/></svg>
<svg class="ic" style="left:674.2px;top:62.0px" width="23.0" height="23.0" viewBox="0 0 24 24" ><path d="M12.9,0.6 H17.7 L23,5.7 V23.4 H5.7 L0.4,18.2 V13.4 H3.8 L12.9,4.3Z" fill="#fff" stroke="#444" stroke-width="1.2" stroke-linejoin="round" stroke-linecap="round"/><path d="M3.8,13.4 L12.9,4.3 L15.5,6.3 L6.3,15.8Z" fill="#cfcfcf" stroke="#444" stroke-width="0.8" stroke-linejoin="round" stroke-linecap="round"/><path d="M6.3,15.8 L15.5,6.3 L17.7,8 V17.2 H7.8Z" fill="#999" stroke="#444" stroke-width="0.9" stroke-linejoin="round" stroke-linecap="round"/><path d="M12.9,0.6 L17.7,5.7 H23 M17.7,5.7 V17.2 M0.4,13.4 L5.7,18.5 H23 M5.7,18.5 V23.4" fill="none" stroke="#444" stroke-width="1" stroke-linejoin="round" stroke-linecap="round"/></svg>
<svg class="ic" style="left:717.2px;top:62.0px" width="23.0" height="23.0" viewBox="0 0 24 24" ><path d="M0.6,0.6 H20.1 L23.4,4.1 V23.4 H4.1 L0.6,19.6Z" fill="#fff" stroke="#444" stroke-width="1.2" stroke-linejoin="round" stroke-linecap="round"/><path d="M0.6,0.6 L4.1,4.1 H23.4 M4.1,4.1 V23.4" fill="none" stroke="#444" stroke-width="1" stroke-linejoin="round" stroke-linecap="round"/><path d="M6.9,2 H19.3 V19.2 H6.9Z" fill="#999" stroke="#444" stroke-width="1.1" stroke-linejoin="round" stroke-linecap="round"/><path d="M8.4,2 V17.4 H19.3" fill="none" stroke="#666" stroke-width=".9"/></svg>
<svg class="ic" style="left:759.2px;top:62.0px" width="23.0" height="23.0" viewBox="0 0 24 24" ><path d="M0.6,0.6 H20.1 L23.4,4.1 V23.4 H4.1 L0.6,19.6Z" fill="#fff" stroke="#444" stroke-width="1.2" stroke-linejoin="round" stroke-linecap="round"/><path d="M0.6,0.6 L4.1,4.1 H23.4 M4.1,4.1 V23.4" fill="none" stroke="#444" stroke-width="1" stroke-linejoin="round" stroke-linecap="round"/><circle cx="13.9" cy="13.6" r="7.2" fill="#999" stroke="#444" stroke-width="1.1" stroke-linejoin="round" stroke-linecap="round"/><circle cx="13.4" cy="13.2" r="5" fill="#808080" stroke="#444" stroke-width="0.9" stroke-linejoin="round" stroke-linecap="round"/><path d="M10.3,12.8 A3.4,3.4 0 0 1 13.6,9.8" stroke="#e0e0e0" stroke-width="1.2" fill="none"/></svg>
<svg class="ic" style="left:805.9px;top:62.1px" width="15.3" height="23.0" viewBox="0 0 16 24" ><path d="M0.6,3.4 V21 A7.4,2.8 0 0 0 15.4,21 V3.4" fill="#fff" stroke="#444" stroke-width="1.2" stroke-linejoin="round" stroke-linecap="round"/><path d="M0.6,6.5 A7.4,2.8 0 0 0 15.4,6.5 V16.5 A7.4,2.8 0 0 1 0.6,16.5Z" fill="#a6a6a6" stroke="none"/><path d="M0.6,6.5 A7.4,2.8 0 0 0 15.4,6.5 M0.6,9 A7.4,2.8 0 0 0 15.4,9 M0.6,11.5 A7.4,2.8 0 0 0 15.4,11.5 M0.6,14 A7.4,2.8 0 0 0 15.4,14 M0.6,16.5 A7.4,2.8 0 0 0 15.4,16.5" fill="none" stroke="#4c4c4c" stroke-width="1.1"/><ellipse cx="8" cy="3.4" rx="7.4" ry="2.8" fill="#fff" stroke="#444" stroke-width="1.2" stroke-linejoin="round" stroke-linecap="round"/><path d="M0.6,3.4 V21 M15.4,3.4 V21" stroke="#444" stroke-width="1.2" stroke-linejoin="round" stroke-linecap="round"/></svg>
<div class="box" style="left:836.0px;top:57.5px;width:2px;height:31.5px;background:#cfcfcf"></div>
<svg class="ic" style="left:849.0px;top:62.0px" width="23.0" height="23.0" viewBox="0 0 24 24" ><path d="M0.6,3.0 l1.6,-2.4 h10.0 v9.4 l-1.2,2.2 h-10.4 Z" fill="#fff" stroke="#444" stroke-width="1.1" stroke-linejoin="round" stroke-linecap="round"/><path d="M0.6,3.0 h10.4 v9.2 M11.0,3.0 l1.2,-2.4" fill="none" stroke="#444" stroke-width="0.9" stroke-linejoin="round" stroke-linecap="round"/><path d="M12.2,3.0 l1.6,-2.4 h9.8 v9.2 l-1.2,2.2 h-10.2 Z" fill="#999" stroke="#444" stroke-width="1.1" stroke-linejoin="round" stroke-linecap="round"/><path d="M12.2,3.0 h10.2 v9.0 M22.4,3.0 l1.2,-2.4" fill="none" stroke="#444" stroke-width="0.9" stroke-linejoin="round" stroke-linecap="round"/><path d="M0.6,14.3 l1.6,-2.4 h10.0 v9.4 l-1.2,2.2 h-10.4 Z" fill="#999" stroke="#444" stroke-width="1.1" stroke-linejoin="round" stroke-linecap="round"/><path d="M0.6,14.3 h10.4 v9.2 M11.0,14.3 l1.2,-2.4" fill="none" stroke="#444" stroke-width="0.9" stroke-linejoin="round" stroke-linecap="round"/><path d="M12.2,14.3 l1.6,-2.4 h9.8 v9.2 l-1.2,2.2 h-10.2 Z" fill="#999" stroke="#444" stroke-width="1.1" stroke-linejoin="round" stroke-linecap="round"/><path d="M12.2,14.3 h10.2 v9.0 M22.4,14.3 l1.2,-2.4" fill="none" stroke="#444" stroke-width="0.9" stroke-linejoin="round" stroke-linecap="round"/></svg>
<svg class="ic" style="left:885.0px;top:68.5px" width="14.0" height="10.0" viewBox="0 0 14 10" ><path d="M1.5,2 L7,7.5 L12.5,2" fill="none" stroke="#333" stroke-width="2.2" stroke-linecap="butt" stroke-linejoin="miter"/></svg>
<svg class="ic" style="left:914.0px;top:62.0px" width="23.0" height="23.0" viewBox="0 0 24 24" ><path d="M0.5,0.5 H4.7 L7.8,3.7 V15.1 H10.4 L13,17.7 V23 H4.2 L0.5,19.8Z" fill="#fff" stroke="#444" stroke-width="1.2" stroke-linejoin="round" stroke-linecap="round"/><path d="M0.5,0.5 L4.2,3.7 V23 M4.2,3.7 H7.8 M7.8,17.7 H13 M7.8,15.1 V17.7" fill="none" stroke="#444" stroke-width="1" stroke-linejoin="round" stroke-linecap="round"/><path d="M15.1,0.5 H19.8 L23.5,4.2 V23 H15.1Z" fill="#999" stroke="#444" stroke-width="1.2" stroke-linejoin="round" stroke-linecap="round"/><path d="M15.1,0.5 L18.8,4.2 H23.5 M18.8,4.2 V15.1 H15.1" fill="none" stroke="#666" stroke-width=".9"/><path d="M7.8,0.5 L15.1,7.3 V16.7 L7.8,9.9Z" fill="#e2e2e2" stroke="#c8c8c8" stroke-width=".6"/></svg>
<div class="box" style="left:948.0px;top:57.5px;width:2px;height:31.5px;background:#cfcfcf"></div>
<svg class="ic" style="left:961.0px;top:61.5px" width="24.0" height="24.0" viewBox="0 0 24 24" ><circle cx="8.5" cy="12.5" r="7" fill="#fff" stroke="#444" stroke-width="1.2" stroke-linejoin="round" stroke-linecap="round"/><circle cx="15.5" cy="12.5" r="7" fill="#999" stroke="#444" stroke-width="1.2" stroke-linejoin="round" stroke-linecap="round"/><path d="M12,6.44 A7,7 0 0 1 12,18.56" fill="none" stroke="#444" stroke-width="1.1" stroke-linejoin="round" stroke-linecap="round"/></svg>
<svg class="ic" style="left:1003.5px;top:63.2px" width="24.0" height="21.0" viewBox="0 0 25 22" ><path d="M0.6,0.8 H22 L24.3,3.5 V20.8 H6.3 L0.6,16Z" fill="#fff" stroke="#444" stroke-width="1.3" stroke-linejoin="round" stroke-linecap="round"/><path d="M0.6,0.8 L6.3,4.2 H24.3 M6.3,4.2 V20.8" fill="none" stroke="#444" stroke-width="1" stroke-linejoin="round" stroke-linecap="round"/><path d="M-0.8,8 C2,11 4,14.5 6.8,15 C10,15.5 12,12.5 15.1,11.8 C18.5,11 22,11 25.5,10.2 L25.5,11.8 C22,12.5 18.5,12.3 15.3,13.3 C12,14.3 10,17 6.6,16.5 C3.5,16 1.5,12.5 -0.8,9.8Z" fill="#dcdcdc" stroke="#c2c2c2" stroke-width=".5"/></svg>
<svg class="ic" style="left:1046.0px;top:61.5px" width="24.0" height="24.0" viewBox="0 0 24 24" ><path d="M1.5,14 L3.5,12.2 H11.5 L13,13.5 V22.8 H4 L1.5,20.8Z" fill="#fff" stroke="#444" stroke-width="1.1" stroke-linejoin="round" stroke-linecap="round"/><path d="M1.5,14 L4,15.8 V22.8 M4,15.8 H13" fill="none" stroke="#444" stroke-width="0.9" stroke-linejoin="round" stroke-linecap="round"/><path d="M17,1.5 L23,7 L17.5,14.5 L11.5,9Z" fill="#999" stroke="#444" stroke-width="1.1" stroke-linejoin="round" stroke-linecap="round"/><path d="M11.5,9 L12.5,11 L18,16 L17.5,14.5 M18,16 L23.3,8.8 L23,7" fill="#bbb" stroke="#444" stroke-width="0.9" stroke-linejoin="round" stroke-linecap="round"/><path d="M4,10 C4,6 6,3.5 9,2.5" fill="none" stroke="#222" stroke-width="1.6"/><path d="M7.2,0.8 L11.3,1.8 L8.6,4.8Z" fill="#222"/><path d="M22.5,15 C22.5,18 21,20.5 18.5,21.5" fill="none" stroke="#222" stroke-width="1.6"/><path d="M20,23.2 L15.9,22.3 L18.7,19.3Z" fill="#222"/></svg>
<svg class="ic" style="left:1082.0px;top:68.5px" width="14.0" height="10.0" viewBox="0 0 14 10" ><path d="M1.5,2 L7,7.5 L12.5,2" fill="none" stroke="#333" stroke-width="2.2" stroke-linecap="butt" stroke-linejoin="miter"/></svg>
<svg class="ic" style="left:1112.0px;top:61.5px" width="24.0" height="24.0" viewBox="0 0 24 24" ><path d="M3,4.2 L5,2.5 H20 V19.5 H5.5 L3,17.5Z" fill="#c2c2c2"/><path d="M5.5,6 H20 V19.5 H5.5Z" fill="#a3a3a3"/><circle cx="18" cy="17.5" r="6.2" fill="#2a2a2a"/><path d="M15.5,15 l5,5 m0,-5 l-5,5" stroke="#fff" stroke-width="1.7" stroke-linecap="round"/></svg>
<div class="box" style="left:1145.7px;top:57.5px;width:2px;height:31.5px;background:#cfcfcf"></div>
<svg class="ic" style="left:1157.7px;top:61.6px" width="25.0" height="24.0" viewBox="0 0 26 25" ><path d="M0.6,17 C1.5,8 8,1.5 17,0.6 L23.4,5.7 L19.6,8 C13,9 8.5,14 6.9,22.7Z" fill="#9a9a9a"/><path d="M10.1,20.2 C11,17.5 13,15.2 15.2,13.9 C18,12 20.5,10.5 23.4,9.5 L25.7,13.3 C23,14.3 20.8,16 18.9,17.7 C17.2,19.5 16,22 15.2,24.6Z" fill="#fff" stroke="#444" stroke-width="1" stroke-linejoin="round" stroke-linecap="round"/><path d="M9.6,8.3 L17.2,10.6 L14.9,12 L18.6,16.3 L16.9,17.7 L13.3,13.4 L11.9,15.8Z" fill="#222" stroke="#fff" stroke-width=".7"/></svg>
<svg class="ic" style="left:1201.7px;top:61.6px" width="23.0" height="23.0" viewBox="0 0 24 24" ><path d="M0.6,7 C4,5.5 6.5,3.5 9.5,2.5 C12.5,1.5 16,1.8 18.9,1.3 L24,10.1 C21,10.3 19,10.8 17,11.8 C13,13.5 9.5,15.5 6.3,17.7Z" fill="#9e9e9e"/><circle cx="17.7" cy="17.7" r="6.2" fill="#2a2a2a"/><path d="M15.2,15.2 l5,5 m0,-5 l-5,5" stroke="#fff" stroke-width="1.7" stroke-linecap="round"/></svg>
<svg class="ic" style="left:1243.8px;top:61.6px" width="23.0" height="23.0" viewBox="0 0 24 24" ><path d="M0.4,12 L0.4,19 L5.3,23.4 H23.6 V13.3 L18.6,8 C15,8.3 10.5,8.2 6.6,8.8Z" fill="#fff" stroke="#444" stroke-width="1.2" stroke-linejoin="round" stroke-linecap="round"/><path d="M0.4,12 L6.6,8.8 C10.5,8.2 15,8.3 18.6,8 L23.6,13.3 C18,13.8 11,14.8 5.3,16.4Z" fill="#999" stroke="#444" stroke-width="1" stroke-linejoin="round" stroke-linecap="round"/><path d="M5.3,16.4 V23.4" fill="none" stroke="#444" stroke-width="1" stroke-linejoin="round" stroke-linecap="round"/><path d="M11.9,1.6 L15.6,6.6 H13.4 V12.6 H10.4 V6.6 H8.2Z" fill="#222" stroke="#fff" stroke-width=".9"/></svg>
<svg class="ic" style="left:1287.0px;top:61.6px" width="23.0" height="23.0" viewBox="0 0 24 24" ><path d="M0.6,4.4 C4,3.2 6.5,2 9.5,1.3 C12.5,0.6 15.5,1 18.3,0.6 L23.4,6.3 C20,6.6 17.5,7.2 14.5,8.2 C11.5,9.2 9,10 6.3,10.7Z" fill="#a0a0a0"/><path d="M0.4,12 L18.9,11.4 L23.4,15.2 V23.4 H5.7 L0.4,19Z" fill="#fff" stroke="#444" stroke-width="1.2" stroke-linejoin="round" stroke-linecap="round"/><path d="M0.4,12 L5.7,16.4 H23.4 M5.7,16.4 V23.4" fill="none" stroke="#444" stroke-width="1" stroke-linejoin="round" stroke-linecap="round"/><path d="M6.2,17.6 H22.8" stroke="#c8c8c8" stroke-width="1.4" fill="none"/></svg>
<div class="box" style="left:1320.7px;top:57.5px;width:2px;height:31.5px;background:#cfcfcf"></div>
<svg class="ic" style="left:1334.0px;top:61.5px" width="24.0" height="24.0" viewBox="0 0 24 24" ><path d="M2,1.5 L22.5,4.5 V22.5 L2,19Z" fill="#d9d9d9" stroke="#444" stroke-width="1.4" stroke-linejoin="round" stroke-linecap="round"/><path d="M12.5,3 V11.5 L22.5,13" fill="none" stroke="#444" stroke-width="1.2" stroke-linejoin="round" stroke-linecap="round"/></svg>
<svg class="ic" style="left:1376.5px;top:61.5px" width="24.0" height="24.0" viewBox="0 0 24 24" ><path d="M13,3.5 C15,3 16,2 17.5,1 C19,6 22,10 21.5,15 C21,19 18,21 17,23 C16,21.5 15,21 13,21Z" fill="#aaa"/><path d="M2,6.5 L6,3.5 H12 L13.5,5 C12.5,10 13,16 14.5,21.5 H4.5 L2,19.5Z" fill="#fff" stroke="#444" stroke-width="1.2" stroke-linejoin="round" stroke-linecap="round"/><path d="M2,6.5 L4.5,8 C4,12 4,17 4.5,21.5 M4.5,8 H13" fill="none" stroke="#444" stroke-width="1" stroke-linejoin="round" stroke-linecap="round"/></svg>
<svg class="ic" style="left:1412.0px;top:68.5px" width="14.0" height="10.0" viewBox="0 0 14 10" ><path d="M1.5,2 L7,7.5 L12.5,2" fill="none" stroke="#333" stroke-width="2.2" stroke-linecap="butt" stroke-linejoin="miter"/></svg>
<svg class="ic" style="left:1442.8px;top:62.2px" width="22.0" height="21.5" viewBox="0 0 24 24" preserveAspectRatio="none"><path d="M16.4,0.3 L17.5,0.6 L18.6,1.0 L19.5,1.4 L20.3,1.8 L20.9,2.2 L21.3,2.7 L21.5,3.2 L21.6,3.7 L21.5,4.2 L21.1,4.7 L20.6,5.2 L19.9,5.6 L19.1,6.0 L18.1,6.4 L17.0,6.8 L15.8,7.1 L14.5,7.3 L13.2,7.5 L11.8,7.7 L10.5,7.8 L9.2,7.9 L7.9,7.9 L6.7,7.8 L5.7,7.8 L4.7,7.7 L3.9,7.5 L3.3,7.4 L2.8,7.2 L2.5,7.0 L2.4,6.8 L2.5,6.5 L2.8,6.3 L3.3,6.1 L3.9,6.0 L4.7,5.8 L5.7,5.7 L6.7,5.7 L7.9,5.6 L9.2,5.6 L10.5,5.7 L11.8,5.8 L13.2,6.0 L14.5,6.2 L15.8,6.4 L17.0,6.7 L18.1,7.1 L19.1,7.5 L19.9,7.9 L20.6,8.3 L21.1,8.8 L21.5,9.3 L21.6,9.8 L21.5,10.3 L21.3,10.8 L20.9,11.3 L20.3,11.7 L19.5,12.1 L18.6,12.5 L17.5,12.9 L16.4,13.2 L15.1,13.5 L13.8,13.7 L12.5,13.9 L11.1,14.1 L9.8,14.1 L8.5,14.2 L7.2,14.2 L6.1,14.1 L5.1,14.0 L4.2,13.9 L3.5,13.7 L3.0,13.6 L2.6,13.4 L2.4,13.1 L2.4,12.9 L2.6,12.7 L3.0,12.5 L3.6,12.3 L4.3,12.2 L5.2,12.1 L6.2,12.0 L7.4,11.9 L8.6,11.9 L9.9,12.0 L11.2,12.1 L12.6,12.2 L13.9,12.4 L15.3,12.6 L16.5,12.9 L17.6,13.2 L18.7,13.6 L19.6,14.0 L20.3,14.4 L20.9,14.9 L21.3,15.4 L21.6,15.9 L21.6,16.4 L21.4,16.9 L21.1,17.3 L20.6,17.8 L19.9,18.3 L19.0,18.7 L18.0,19.0 L16.9,19.4 L15.7,19.7 L14.4,19.9 L13.1,20.1 L11.7,20.3 L10.3,20.4 L9.0,20.5 L7.8,20.5 L6.6,20.4 L5.5,20.4 L4.6,20.3 L3.8,20.1 L3.2,19.9 L2.7,19.7 L2.5,19.5 L2.4,19.3 L2.5,19.1 L1.2,22.6" fill="none" stroke="#333" stroke-width="1.9" stroke-linecap="round" stroke-linejoin="round"/></svg>
<svg class="ic" style="left:1477.4px;top:68.5px" width="14.0" height="10.0" viewBox="0 0 14 10" ><path d="M1.5,2 L7,7.5 L12.5,2" fill="none" stroke="#333" stroke-width="2.2" stroke-linecap="butt" stroke-linejoin="miter"/></svg>
<svg class="ic" style="left:1507.0px;top:61.5px" width="24.0" height="24.0" viewBox="0 0 24 24" ><path d="M12,12 V3.4 A8.6,8.6 0 0 1 20.6,12Z" fill="#e6e6e6"/><circle cx="12" cy="12" r="10.8" fill="none" stroke="#444" stroke-width="1.3"/><circle cx="12" cy="12" r="8.6" fill="none" stroke="#444" stroke-width="1.2"/><path d="M12,4.5 V12.5 H19.5" fill="none" stroke="#444" stroke-width="1.3"/></svg>
<svg class="ic" style="left:1548.6px;top:61.5px" width="24.0" height="24.0" viewBox="0 0 24 24" ><path d="M2.5,12.5 L6,9.5 H11 V3 L13.5,1 H20.5 L22.5,3 V23 H6 L2.5,20Z" fill="#fff" stroke="#444" stroke-width="1.2" stroke-linejoin="round" stroke-linecap="round"/><path d="M2.5,12.5 L6,15 V23 M6,15 H13.5 V5 L11,3 M13.5,5 H22.5" fill="none" stroke="#444" stroke-width="1" stroke-linejoin="round" stroke-linecap="round"/><path d="M13.5,5 L6,15 H13.5Z" fill="#c9c9c9" opacity=".7"/><path d="M2.5,2 C6,1.5 8.5,3.5 9.3,6.5" fill="none" stroke="#222" stroke-width="1.7"/><path d="M6.2,6.2 L10.2,10 L12,5Z" fill="#222"/></svg>
<span id="t9" class="t" style="left:1590.0px;top:58.7px;font-size:22.5px;line-height:28px;color:#333;font-weight:bold;font-style:normal;letter-spacing:0.000px;">(</span>
<span id="t10" class="t" style="left:1597.0px;top:56.1px;font-size:25.0px;line-height:31px;color:#2d2d2d;font-weight:bold;font-style:italic;letter-spacing:0.000px;font-family:'Liberation Serif',serif;">x</span>
<span id="t11" class="t" style="left:1610.2px;top:58.7px;font-size:22.5px;line-height:28px;color:#333;font-weight:bold;font-style:normal;letter-spacing:0.000px;">)</span>
<svg class="ic" style="left:1632.1px;top:60.5px" width="27.0" height="26.0" viewBox="0 0 27 26" ><path d="M13.5,0.8 l5.5,3.0 v6.1 l-5.5,3.0 l-5.5,-3.0 v-6.1 Z" fill="#fff" stroke="#3a3a3a" stroke-width="1.15" stroke-linejoin="round"/><path d="M13.5,6.7 l5.5,-3.0 v6.1 l-5.5,3.0 Z" fill="#dcdcdc" stroke="#3a3a3a" stroke-width="1.05" stroke-linejoin="round"/><path d="M8.0,3.8 l5.5,3.0" fill="none" stroke="#3a3a3a" stroke-width="1.05"/><path d="M6.5,12.5 l5.5,3.0 v6.1 l-5.5,3.0 l-5.5,-3.0 v-6.1 Z" fill="#fff" stroke="#3a3a3a" stroke-width="1.15" stroke-linejoin="round"/><path d="M6.5,18.4 l5.5,-3.0 v6.1 l-5.5,3.0 Z" fill="#dcdcdc" stroke="#3a3a3a" stroke-width="1.05" stroke-linejoin="round"/><path d="M1.0,15.5 l5.5,3.0" fill="none" stroke="#3a3a3a" stroke-width="1.05"/><path d="M20.3,12.5 l5.5,3.0 v6.1 l-5.5,3.0 l-5.5,-3.0 v-6.1 Z" fill="#fff" stroke="#3a3a3a" stroke-width="1.15" stroke-linejoin="round"/><path d="M20.3,18.4 l5.5,-3.0 v6.1 l-5.5,3.0 Z" fill="#dcdcdc" stroke="#3a3a3a" stroke-width="1.05" stroke-linejoin="round"/><path d="M14.8,15.5 l5.5,3.0" fill="none" stroke="#3a3a3a" stroke-width="1.05"/></svg>
<div class="box" style="left:1668.0px;top:57.5px;width:2px;height:31.5px;background:#cfcfcf"></div>
<svg class="ic" style="left:1682.4px;top:61.5px" width="22.0" height="24.0" viewBox="0 0 22 24" ><path d="M11,1 L21,5.5 V17.5 L11,23 L1,17.5 V5.5Z" fill="#e9e9e9" stroke="#444" stroke-width="1.4" stroke-linejoin="round" stroke-linecap="round"/><path d="M1,5.5 L11,10.5 V23 L1,17.5Z" fill="#e4e4e4" stroke="#444" stroke-width="1.4" stroke-linejoin="round" stroke-linecap="round"/><path d="M11,10.5 L21,5.5 V17.5 L11,23Z" fill="#c9c9c9" stroke="#444" stroke-width="1.4" stroke-linejoin="round" stroke-linecap="round"/></svg>
<svg class="ic" style="left:1717.3px;top:68.5px" width="14.0" height="10.0" viewBox="0 0 14 10" ><path d="M1.5,2 L7,7.5 L12.5,2" fill="none" stroke="#333" stroke-width="2.2" stroke-linecap="butt" stroke-linejoin="miter"/></svg>
<div class="box" style="left:1751px;top:53px;width:221px;height:41px;background:#eeeeee;border-radius:4px"></div>
<span id="t12" class="t" style="left:1763.5px;top:63.3px;font-size:17.5px;line-height:22px;color:#333;font-weight:normal;font-style:normal;letter-spacing:-0.270px;">Search tools...</span>
<div class="box" style="left:1876.4px;top:64.5px;width:27.0px;height:21.5px;background:#f4f4f4;border:1px solid #b5b5b5;border-radius:3px"></div>
<span id="t13" class="t" style="left:1880.5px;top:66.3px;font-size:14.3px;line-height:18px;color:#444;font-weight:normal;font-style:normal;letter-spacing:-0.021px;">ctrl</span>
<div class="box" style="left:1904.8px;top:64.5px;width:32.8px;height:21.5px;background:#f4f4f4;border:1px solid #b5b5b5;border-radius:3px"></div>
<span id="t14" class="t" style="left:1908.5px;top:66.3px;font-size:14.3px;line-height:18px;color:#444;font-weight:normal;font-style:normal;letter-spacing:-0.184px;">shift</span>
<div class="box" style="left:1938.9px;top:64.5px;width:19.8px;height:21.5px;background:#f4f4f4;border:1px solid #b5b5b5;border-radius:3px"></div>
<span id="t15" class="t" style="left:1944.8px;top:66.3px;font-size:14.3px;line-height:18px;color:#444;font-weight:normal;font-style:normal;letter-spacing:0.000px;">p</span>
<svg class="ic" style="left:11.5px;top:62.0px" width="26.0" height="24.0" viewBox="0 0 26 24" ><circle cx="5" cy="4.5" r="3.3" fill="none" stroke="#2d2d2d" stroke-width="2"/><path d="M5,8 V20" stroke="#2d2d2d" stroke-width="2"/><circle cx="5" cy="20.5" r="2.3" fill="#2d2d2d"/><path d="M5,16 C5,13 7,12 9.5,12" fill="none" stroke="#2d2d2d" stroke-width="2"/><circle cx="10.5" cy="12" r="2.2" fill="#2d2d2d"/><path d="M12.5,3.2 H25.5 M14.5,9 H25.5 M15.5,14.8 H25.5 M11,20.6 H25.5" stroke="#2d2d2d" stroke-width="2.3"/></svg>
<svg class="ic" style="left:15.5px;top:106.2px" width="21.0" height="23.0" viewBox="0 0 21 24" ><circle cx="5" cy="12" r="3.8" fill="#2d2d2d"/><path d="M5,0 V7 M5,17 V24" stroke="#2d2d2d" stroke-width="2.4" stroke-dasharray="2.4 1.7"/><path d="M15.5,13.5 V23.5 M10.5,18.5 H20.5" stroke="#1a4fb3" stroke-width="2.6"/></svg>
<svg class="ic" style="left:12.0px;top:150.5px" width="25.0" height="21.0" viewBox="0 0 25 21" ><path d="M12.5,0.5 C19.5,0.5 24.5,3.8 24.5,8 C24.5,12.2 19.5,15.5 12.5,15.5 C11,15.5 9.5,15.3 8.2,15 C6.5,17.5 4,19.5 1.5,20.5 C3,18.5 3.8,16.2 3.8,13.8 C1.7,12.4 0.5,10.3 0.5,8 C0.5,3.8 5.5,0.5 12.5,0.5Z" fill="#2d2d2d"/></svg>
<svg class="ic" style="left:12.5px;top:193.5px" width="24.0" height="23.0" viewBox="0 0 24 23" ><circle cx="13.5" cy="13" r="8.6" fill="none" stroke="#2d2d2d" stroke-width="2.2"/><path d="M10,1.2 H17 M13.5,1.2 V4.5 M19.5,4.5 L21.5,6.5" stroke="#2d2d2d" stroke-width="2.2" fill="none"/><path d="M13.5,13.5 L17,9.5" stroke="#2d2d2d" stroke-width="2"/><path d="M0.5,11 H6.5 M0,14 H5.5 M2.5,17 H6.5" stroke="#2d2d2d" stroke-width="1.3"/><path d="M0,9 H9 V19 H0Z" fill="#fafafa" opacity=".0"/></svg>
<div class="box" style="left:0;top:226.5px;width:49px;height:1.5px;background:#d4d4d4"></div>
<svg class="ic" style="left:14.0px;top:238.0px" width="21.0" height="23.0" viewBox="0 0 20.5 22.5" ><rect x="1.1" y="1.1" width="18.3" height="20.3" rx="2.3" fill="none" stroke="#2d2d2d" stroke-width="2"/><path d="M9.5,6 H16 M9.5,11.3 H16 M9.5,16.5 H16" stroke="#2d2d2d" stroke-width="2.2"/><path d="M4,5.8 L5.5,7.5 L8,4.2 M4,11 L5.5,12.7 L8,9.4 M4,16.3 L5.5,18 L8,14.7" fill="none" stroke="#2d2d2d" stroke-width="1.4"/></svg>
<svg class="ic" style="left:13.0px;top:1268.0px" width="24.0" height="20.0" viewBox="0 0 24 21" ><path d="M1,1 H23 V10 H15.5 A6.3,6.3 0 0 0 4,10 H1Z" fill="#2d2d2d"/><circle cx="10" cy="11.5" r="5" fill="#fafafa" stroke="#2d2d2d" stroke-width="2.2"/><path d="M13.8,15.3 L19.5,20" stroke="#2d2d2d" stroke-width="2.6" stroke-linecap="round"/></svg>
<svg class="ic" style="left:62.5px;top:116.5px" width="21.0" height="19.0" viewBox="0 0 21 19" ><path d="M1,1 H20 L12.6,9.6 V17.5 L8.4,14.5 V9.6Z" fill="none" stroke="#333" stroke-width="1.5" stroke-linejoin="round"/></svg>
<div class="box" style="left:99px;top:106px;width:197px;height:37px;border:1.3px solid #9a9a9a;border-radius:4.5px;background:#fff"></div>
<span id="t16" class="t" style="left:107.4px;top:113.9px;font-size:17.5px;line-height:22px;color:#9b9b9b;font-weight:normal;font-style:italic;letter-spacing:-0.721px;">Filter by name or type</span>
<span id="t17" class="t" style="left:55.3px;top:152.6px;font-size:15.6px;line-height:20px;color:#2b2b2b;font-weight:bold;font-style:normal;letter-spacing:0.260px;">Features (34)</span>
<svg class="ic" style="left:219.5px;top:154.5px" width="23.0" height="18.0" viewBox="0 0 23 18" ><path d="M1,14 V2.2 Q1,1 2.2,1 L7.5,1 L9.5,3.3 L20.8,3.3 Q22,3.3 22,4.5 L22,15.8 Q22,17 20.8,17 L11,17" fill="none" stroke="#444" stroke-width="1.4"/><path d="M1,14.5 V16 Q1,17 2.2,17 H3.5" fill="none" stroke="#444" stroke-width="1.4" stroke-dasharray="2 1.5"/><path d="M6.5,6 V15 M2,10.5 H11" stroke="#1a4fb3" stroke-width="2.4"/></svg>
<svg class="ic" style="left:258.5px;top:151.5px" width="20.0" height="23.0" viewBox="0 0 20 23" ><circle cx="10" cy="13.5" r="8.5" fill="none" stroke="#2d2d2d" stroke-width="2"/><path d="M6.5,1.2 H13.5 M10,1.2 V5 M16.5,5 L18.5,7" stroke="#2d2d2d" stroke-width="2" fill="none"/><path d="M10,13.5 L14,17.5" stroke="#2d2d2d" stroke-width="1.6"/></svg>
<div class="box" style="left:279px;top:181px;width:21px;height:632px;background:#f1f1f1"></div>
<div class="box" style="left:281px;top:373px;width:17px;height:382.5px;background:#c1c1c1"></div>
<svg class="ic" style="left:284.5px;top:189.5px" width="10" height="5" viewBox="0 0 10 5"><path d="M0,5 H10 L5,0Z" fill="#505050"/></svg>
<svg class="ic" style="left:284.5px;top:798.5px" width="10" height="5" viewBox="0 0 10 5"><path d="M0,0 H10 L5,5Z" fill="#505050"/></svg>
<div class="box" style="left:50px;top:582.4px;width:229px;height:29.6px;background:#eceff4;border-bottom:1.5px solid #8fcbee"></div>
<div class="box" style="left:50px;top:679px;width:229px;height:30.2px;background:#b5ddf6"></div>
<div class="box" style="left:50px;top:712px;width:229px;height:30.2px;background:#b5ddf6"></div>
<div class="box" style="left:50px;top:1011px;width:250px;height:30px;background:#eceff4;border-bottom:1.5px solid #8fcbee"></div>
<svg class="ic" style="left:0;top:0" width="320" height="1294"><g stroke="#cfcfcf" stroke-width="1.5" fill="none"><path d="M62,181.5 V385 M56,385 H68"/><path d="M62,418 V580 M56,580 H68"/><path d="M62,613 V775 M56,775 H68"/></g></svg>
<svg class="ic" style="left:80.5px;top:181px" width="20" height="4" viewBox="0 0 20 4"><path d="M1.5,0 V1.5 Q1.5,3 3,3 H17" fill="none" stroke="#555" stroke-width="1.2"/></svg>
<svg class="ic" style="left:80.5px;top:195.0px" width="20.0" height="20.0" viewBox="0 0 24 24" ><path d="M0.6,0.6 H20.1 L23.4,4.1 V23.4 H4.1 L0.6,19.6Z" fill="#fff" stroke="#444" stroke-width="1.2" stroke-linejoin="round" stroke-linecap="round"/><path d="M0.6,0.6 L4.1,4.1 H23.4 M4.1,4.1 V23.4" fill="none" stroke="#444" stroke-width="1" stroke-linejoin="round" stroke-linecap="round"/><path d="M8.6,8.6 H20.6 L23.4,12 V23.4 H12 L8.6,20.5Z" fill="#999" stroke="#444" stroke-width="1.1" stroke-linejoin="round" stroke-linecap="round"/><path d="M8.6,8.6 L12,12 H23.4 M12,12 V23.4" fill="none" stroke="#444" stroke-width="1" stroke-linejoin="round" stroke-linecap="round"/></svg>
<span id="t18" class="t" style="left:106.8px;top:195.7px;font-size:16.6px;line-height:21px;color:#333;font-weight:normal;font-style:normal;letter-spacing:-0.288px;">1.5x1.5 Extrude</span>
<svg class="ic" style="left:80.3px;top:228.2px" width="20.5" height="20.5" viewBox="0 0 20.5 20.5" ><path d="M0.6,0.6 H10.4 L19.9,5 V20 H10.4 L0.6,15.3Z" fill="#fff" stroke="#444" stroke-width="1.3" stroke-linejoin="round"/><path d="M1.2,1.2 H10.2 L19.3,5.4 V6 H11.2 L1.2,2.6Z" fill="#d5d5d5"/><path d="M11.2,6 H19.3 V19.4 H11.2Z" fill="#a0a0a0"/><path d="M12.8,7.3 H17.6 V18.3 H12.8Z" fill="#787878"/><path d="M17.6,7.3 V18.3 H14 L13.3,14Z" fill="#b4b4b4"/><g fill="#555"><ellipse cx="3.6" cy="6.1" rx="1.3" ry="2.1"/><ellipse cx="8" cy="8.3" rx="1.3" ry="2.1"/><ellipse cx="3.6" cy="12.2" rx="1.3" ry="2.1"/><ellipse cx="8" cy="14.6" rx="1.3" ry="2.1"/></g></svg>
<span id="t19" class="t" style="left:106.8px;top:228.2px;font-size:16.6px;line-height:21px;color:#333;font-weight:normal;font-style:normal;letter-spacing:-0.233px;">Convert Tub...</span>
<svg class="ic" style="left:226.0px;top:226.0px" width="7.0" height="24.0" viewBox="0 0 7 24" ><circle cx="3.5" cy="12" r="3.5" fill="#222"/><path d="M3.5,0.5 V6.5 M3.5,17.5 V23.5" stroke="#222" stroke-width="2" stroke-dasharray="2.2 1.6"/></svg>
<svg class="ic" style="left:80.5px;top:261.5px" width="20.0" height="19.0" viewBox="0 0 23 22" ><path d="M3,17.8 L5.2,11.2 L15.8,0.8 L20.6,5.4 L9.8,15.8Z M5.2,11.2 L9.8,15.8" fill="#fff" stroke="#b5b5b5" stroke-width="1.4" stroke-linejoin="round"/><path d="M3,17.8 L4.2,14.3 L6.6,16.6Z" fill="#b5b5b5"/><path d="M0.5,20.8 H22.5" stroke="#a9c0ea" stroke-width="1.5"/></svg>
<span id="t20" class="t" style="left:106.8px;top:260.7px;font-size:16.6px;line-height:21px;color:#a9a9a9;font-weight:normal;font-style:normal;letter-spacing:-0.178px;">Inner Tube Holes</span>
<svg class="ic" style="left:80.5px;top:292.5px" width="20.0" height="20.0" viewBox="0 0 24 24" ><path d="M0.6,0.6 H20.1 L23.4,4.1 V23.4 H4.1 L0.6,19.6Z" fill="#fff" stroke="#444" stroke-width="1.2" stroke-linejoin="round" stroke-linecap="round"/><path d="M0.6,0.6 L4.1,4.1 H23.4 M4.1,4.1 V23.4" fill="none" stroke="#444" stroke-width="1" stroke-linejoin="round" stroke-linecap="round"/><path d="M8.6,8.6 H20.6 L23.4,12 V23.4 H12 L8.6,20.5Z" fill="#999" stroke="#444" stroke-width="1.1" stroke-linejoin="round" stroke-linecap="round"/><path d="M8.6,8.6 L12,12 H23.4 M12,12 V23.4" fill="none" stroke="#444" stroke-width="1" stroke-linejoin="round" stroke-linecap="round"/></svg>
<span id="t21" class="t" style="left:106.8px;top:293.2px;font-size:16.6px;line-height:21px;color:#333;font-weight:normal;font-style:normal;letter-spacing:-0.178px;">Inner Tube Holes</span>
<svg class="ic" style="left:80.5px;top:326.5px" width="20.0" height="19.0" viewBox="0 0 23 22" ><path d="M3,17.8 L5.2,11.2 L15.8,0.8 L20.6,5.4 L9.8,15.8Z M5.2,11.2 L9.8,15.8" fill="#fff" stroke="#b5b5b5" stroke-width="1.4" stroke-linejoin="round"/><path d="M3,17.8 L4.2,14.3 L6.6,16.6Z" fill="#b5b5b5"/><path d="M0.5,20.8 H22.5" stroke="#a9c0ea" stroke-width="1.5"/></svg>
<span id="t22" class="t" style="left:106.8px;top:325.7px;font-size:16.6px;line-height:21px;color:#a9a9a9;font-weight:normal;font-style:normal;letter-spacing:-0.191px;">Outer Tube Holes</span>
<svg class="ic" style="left:80.5px;top:357.5px" width="20.0" height="20.0" viewBox="0 0 24 24" ><path d="M0.6,0.6 H20.1 L23.4,4.1 V23.4 H4.1 L0.6,19.6Z" fill="#fff" stroke="#444" stroke-width="1.2" stroke-linejoin="round" stroke-linecap="round"/><path d="M0.6,0.6 L4.1,4.1 H23.4 M4.1,4.1 V23.4" fill="none" stroke="#444" stroke-width="1" stroke-linejoin="round" stroke-linecap="round"/><path d="M8.6,8.6 H20.6 L23.4,12 V23.4 H12 L8.6,20.5Z" fill="#999" stroke="#444" stroke-width="1.1" stroke-linejoin="round" stroke-linecap="round"/><path d="M8.6,8.6 L12,12 H23.4 M12,12 V23.4" fill="none" stroke="#444" stroke-width="1" stroke-linejoin="round" stroke-linecap="round"/></svg>
<span id="t23" class="t" style="left:106.8px;top:358.2px;font-size:16.6px;line-height:21px;color:#333;font-weight:normal;font-style:normal;letter-spacing:-0.191px;">Outer Tube Holes</span>
<svg class="ic" style="left:54.5px;top:396.0px" width="15.0" height="10.0" viewBox="0 0 15 10" ><path d="M1.5,2 L7.5,8 L13.5,2" fill="none" stroke="#444" stroke-width="2.2"/></svg>
<svg class="ic" style="left:81.0px;top:392.2px" width="20.0" height="15.5" viewBox="0 0 20 15.5" ><path d="M0.8,2 Q0.8,0.8 2,0.8 L6.5,0.8 L8.3,3 L18,3 Q19.2,3 19.2,4.2 L19.2,13.5 Q19.2,14.7 18,14.7 L2,14.7 Q0.8,14.7 0.8,13.5Z" fill="#fff" stroke="#555" stroke-width="1.2"/></svg>
<span id="t24" class="t" style="left:108.0px;top:390.7px;font-size:16.6px;line-height:21px;color:#333;font-weight:normal;font-style:normal;letter-spacing:-0.203px;">Crush Block (5)</span>
<svg class="ic" style="left:80.5px;top:424.0px" width="20.0" height="19.0" viewBox="0 0 23 22" ><path d="M3,17.8 L5.2,11.2 L15.8,0.8 L20.6,5.4 L9.8,15.8Z M5.2,11.2 L9.8,15.8" fill="#fff" stroke="#555" stroke-width="1.4" stroke-linejoin="round"/><path d="M3,17.8 L4.2,14.3 L6.6,16.6Z" fill="#555"/><path d="M0.5,20.8 H22.5" stroke="#3b6fd6" stroke-width="1.5"/></svg>
<span id="t25" class="t" style="left:106.8px;top:423.2px;font-size:16.6px;line-height:21px;color:#333;font-weight:normal;font-style:normal;letter-spacing:-0.075px;">Crush Block</span>
<svg class="ic" style="left:80.5px;top:455.0px" width="20.0" height="20.0" viewBox="0 0 24 24" ><path d="M0.6,0.6 H20.1 L23.4,4.1 V23.4 H4.1 L0.6,19.6Z" fill="#fff" stroke="#444" stroke-width="1.2" stroke-linejoin="round" stroke-linecap="round"/><path d="M0.6,0.6 L4.1,4.1 H23.4 M4.1,4.1 V23.4" fill="none" stroke="#444" stroke-width="1" stroke-linejoin="round" stroke-linecap="round"/><path d="M8.6,8.6 H20.6 L23.4,12 V23.4 H12 L8.6,20.5Z" fill="#999" stroke="#444" stroke-width="1.1" stroke-linejoin="round" stroke-linecap="round"/><path d="M8.6,8.6 L12,12 H23.4 M12,12 V23.4" fill="none" stroke="#444" stroke-width="1" stroke-linejoin="round" stroke-linecap="round"/></svg>
<span id="t26" class="t" style="left:106.8px;top:455.7px;font-size:16.6px;line-height:21px;color:#333;font-weight:normal;font-style:normal;letter-spacing:-0.086px;">Crush Block Extrude</span>
<svg class="ic" style="left:80.5px;top:487.5px" width="20.0" height="20.0" viewBox="0 0 24 24" ><path d="M0.6,0.6 H20.1 L23.4,4.1 V23.4 H4.1 L0.6,19.6Z" fill="#fff" stroke="#444" stroke-width="1.2" stroke-linejoin="round" stroke-linecap="round"/><path d="M0.6,0.6 L4.1,4.1 H23.4 M4.1,4.1 V23.4" fill="none" stroke="#444" stroke-width="1" stroke-linejoin="round" stroke-linecap="round"/><path d="M8.6,8.6 H20.6 L23.4,12 V23.4 H12 L8.6,20.5Z" fill="#999" stroke="#444" stroke-width="1.1" stroke-linejoin="round" stroke-linecap="round"/><path d="M8.6,8.6 L12,12 H23.4 M12,12 V23.4" fill="none" stroke="#444" stroke-width="1" stroke-linejoin="round" stroke-linecap="round"/></svg>
<span id="t27" class="t" style="left:106.8px;top:488.2px;font-size:16.6px;line-height:21px;color:#333;font-weight:normal;font-style:normal;letter-spacing:-0.154px;">Crush Block Flange</span>
<svg class="ic" style="left:80.5px;top:520.0px" width="20.0" height="20.0" viewBox="0 0 24 24" ><path d="M0.4,12 C0.4,5 4,1 9.3,0.6 H19.8 L23.4,4.1 V23.4 H4.5 L0.4,19.6Z" fill="#fff" stroke="#444" stroke-width="1.2" stroke-linejoin="round" stroke-linecap="round"/><path d="M0.4,12 C0.4,5 4,1 9.3,0.6 L13.1,4.4 C8,5 4.8,8.5 4.5,14.2Z" fill="#999" stroke="#444" stroke-width="1" stroke-linejoin="round" stroke-linecap="round"/><path d="M13.1,4.4 L23.4,4.1 M4.5,14.2 V23.4" fill="none" stroke="#444" stroke-width="1" stroke-linejoin="round" stroke-linecap="round"/></svg>
<span id="t28" class="t" style="left:106.8px;top:520.7px;font-size:16.6px;line-height:21px;color:#333;font-weight:normal;font-style:normal;letter-spacing:0.046px;">Fillet 1</span>
<svg class="ic" style="left:80.5px;top:552.5px" width="20.0" height="20.0" viewBox="0 0 24 24" ><path d="M0.5,9.1 L9.5,0.6 H20 L23.4,3.8 V23.4 H4.2 L0.5,19.6Z" fill="#fff" stroke="#444" stroke-width="1.2" stroke-linejoin="round" stroke-linecap="round"/><path d="M0.5,9.1 L9.5,0.6 L13.3,4.1 L4.2,12.9Z" fill="#999" stroke="#444" stroke-width="1" stroke-linejoin="round" stroke-linecap="round"/><path d="M13.3,4.1 L23.4,3.8 M4.2,12.9 V23.4" fill="none" stroke="#444" stroke-width="1" stroke-linejoin="round" stroke-linecap="round"/></svg>
<span id="t29" class="t" style="left:106.8px;top:553.2px;font-size:16.6px;line-height:21px;color:#333;font-weight:normal;font-style:normal;letter-spacing:-0.159px;">Chamfer 2</span>
<svg class="ic" style="left:54.5px;top:591.0px" width="15.0" height="10.0" viewBox="0 0 15 10" ><path d="M1.5,2 L7.5,8 L13.5,2" fill="none" stroke="#444" stroke-width="2.2"/></svg>
<svg class="ic" style="left:81.0px;top:587.2px" width="20.0" height="15.5" viewBox="0 0 20 15.5" ><path d="M0.8,2 Q0.8,0.8 2,0.8 L6.5,0.8 L8.3,3 L18,3 Q19.2,3 19.2,4.2 L19.2,13.5 Q19.2,14.7 18,14.7 L2,14.7 Q0.8,14.7 0.8,13.5Z" fill="#fff" stroke="#555" stroke-width="1.2"/></svg>
<span id="t30" class="t" style="left:108.0px;top:585.7px;font-size:16.6px;line-height:21px;color:#333;font-weight:normal;font-style:normal;letter-spacing:-0.367px;">Hooks (4)</span>
<svg class="ic" style="left:80.5px;top:619.0px" width="20.0" height="19.0" viewBox="0 0 23 22" ><path d="M3,17.8 L5.2,11.2 L15.8,0.8 L20.6,5.4 L9.8,15.8Z M5.2,11.2 L9.8,15.8" fill="#fff" stroke="#b5b5b5" stroke-width="1.4" stroke-linejoin="round"/><path d="M3,17.8 L4.2,14.3 L6.6,16.6Z" fill="#b5b5b5"/><path d="M0.5,20.8 H22.5" stroke="#a9c0ea" stroke-width="1.5"/></svg>
<span id="t31" class="t" style="left:106.8px;top:618.2px;font-size:16.6px;line-height:21px;color:#a9a9a9;font-weight:normal;font-style:normal;letter-spacing:-0.288px;">Hook Sketch</span>
<svg class="ic" style="left:80.5px;top:650.0px" width="20.0" height="20.0" viewBox="0 0 24 24" ><path d="M0.6,0.6 H20.1 L23.4,4.1 V23.4 H4.1 L0.6,19.6Z" fill="#fff" stroke="#444" stroke-width="1.2" stroke-linejoin="round" stroke-linecap="round"/><path d="M0.6,0.6 L4.1,4.1 H23.4 M4.1,4.1 V23.4" fill="none" stroke="#444" stroke-width="1" stroke-linejoin="round" stroke-linecap="round"/><path d="M8.6,8.6 H20.6 L23.4,12 V23.4 H12 L8.6,20.5Z" fill="#999" stroke="#444" stroke-width="1.1" stroke-linejoin="round" stroke-linecap="round"/><path d="M8.6,8.6 L12,12 H23.4 M12,12 V23.4" fill="none" stroke="#444" stroke-width="1" stroke-linejoin="round" stroke-linecap="round"/></svg>
<span id="t32" class="t" style="left:106.8px;top:650.7px;font-size:16.6px;line-height:21px;color:#333;font-weight:normal;font-style:normal;letter-spacing:-0.213px;">Hook Extrude</span>
<svg class="ic" style="left:80.5px;top:682.5px" width="20.0" height="20.0" viewBox="0 0 24 24" ><path d="M0.6,0.6 H20.1 L23.4,4.1 V23.4 H4.1 L0.6,19.6Z" fill="#fff" stroke="#444" stroke-width="1.2" stroke-linejoin="round" stroke-linecap="round"/><path d="M0.6,0.6 L4.1,4.1 H23.4 M4.1,4.1 V23.4" fill="none" stroke="#444" stroke-width="1" stroke-linejoin="round" stroke-linecap="round"/><path d="M8.6,8.6 H20.6 L23.4,12 V23.4 H12 L8.6,20.5Z" fill="#999" stroke="#444" stroke-width="1.1" stroke-linejoin="round" stroke-linecap="round"/><path d="M8.6,8.6 L12,12 H23.4 M12,12 V23.4" fill="none" stroke="#444" stroke-width="1" stroke-linejoin="round" stroke-linecap="round"/></svg>
<span id="t33" class="t" style="left:106.8px;top:683.2px;font-size:16.6px;line-height:21px;color:#333;font-weight:normal;font-style:normal;letter-spacing:-0.028px;">Bolt Hole Extrude</span>
<svg class="ic" style="left:79.9px;top:715.6px" width="20.0" height="21.5" viewBox="0 0 20 21.5" ><path d="M0.3,13 L6,1.6 C7,0.2 9,0 11,1 C14,2.3 17,4.5 18.7,6.5 C20,8 20,9.5 19.2,10.8 L12.9,21.3 H0.3Z" fill="#f1f7fc"/><path d="M15,9.5 L19.2,10.8 L12.9,21.3 H8.3Z" fill="#d7dfe6"/><path d="M6.3,2.2 C9,1 17,6 18.8,10.3 C15,10.5 8,6 6.3,2.2Z" fill="#fff"/><ellipse cx="12.3" cy="5.6" rx="2.5" ry="1.2" transform="rotate(33 12.3 5.6)" fill="#8a9097"/><path d="M0.3,13 L6,1.6 C7,0.2 9,0 11,1 C14,2.3 17,4.5 18.7,6.5 C20,8 20,9.5 19.2,10.8 L12.9,21.3" fill="none" stroke="#3a4248" stroke-width="1.5" stroke-linejoin="round"/></svg>
<span id="t34" class="t" style="left:106.8px;top:715.7px;font-size:16.6px;line-height:21px;color:#333;font-weight:normal;font-style:normal;letter-spacing:-0.792px;">&quot;ROUND Spa...</span>
<svg class="ic" style="left:226.0px;top:713.5px" width="7.0" height="24.0" viewBox="0 0 7 24" ><circle cx="3.5" cy="12" r="3.5" fill="#222"/><path d="M3.5,0.5 V6.5 M3.5,17.5 V23.5" stroke="#222" stroke-width="2" stroke-dasharray="2.2 1.6"/></svg>
<div class="box" style="left:80px;top:755px;width:193px;height:7.6px;background:#ababab"></div>
<svg class="ic" style="left:57.5px;top:783.5px" width="10.0" height="15.0" viewBox="0 0 10 15" ><path d="M2,1.5 L8,7.5 L2,13.5" fill="none" stroke="#444" stroke-width="2.2"/></svg>
<svg class="ic" style="left:81.0px;top:782.2px" width="20.0" height="15.5" viewBox="0 0 20 15.5" ><path d="M0.8,2 Q0.8,0.8 2,0.8 L6.5,0.8 L8.3,3 L18,3 Q19.2,3 19.2,4.2 L19.2,13.5 Q19.2,14.7 18,14.7 L2,14.7 Q0.8,14.7 0.8,13.5Z" fill="#fff" stroke="#b5b5b5" stroke-width="1.2"/></svg>
<span id="t35" class="t" style="left:108.0px;top:780.7px;font-size:16.6px;line-height:21px;color:#a3a3a3;font-weight:normal;font-style:italic;letter-spacing:-0.195px;">Hook Crush Block (2)</span>
<div class="box" style="left:50px;top:813px;width:250px;height:2px;background:#dcdcdc"></div>
<svg class="ic" style="left:54.5px;top:826.0px" width="15.0" height="10.0" viewBox="0 0 15 10" ><path d="M1.5,2 L7.5,8 L13.5,2" fill="none" stroke="#444" stroke-width="2.2"/></svg>
<span id="t36" class="t" style="left:79.0px;top:820.7px;font-size:16.6px;line-height:21px;color:#333;font-weight:normal;font-style:normal;letter-spacing:-0.203px;">Parts (6)</span>
<svg class="ic" style="left:80.5px;top:852.5px" width="20.0" height="19.0" viewBox="0 0 20 19" ><path d="M1,9.5 L5,7.5 H9.5 V3.2 L13,1 H17 L19,2.8 V18 H4 L1,16Z" fill="#fff" stroke="#555" stroke-width="1.2" stroke-linejoin="round"/><path d="M1,9.5 L4,11.5 V18 M4,11.5 H12.5 V4.8 L9.5,3.2 M12.5,4.8 H19 M12.5,11.5 L9.5,9.5" fill="none" stroke="#555" stroke-width="1.1" stroke-linejoin="round"/></svg>
<span id="t37" class="t" style="left:106.5px;top:852.7px;font-size:16.6px;line-height:21px;color:#333;font-weight:normal;font-style:normal;letter-spacing:-0.355px;">Origin Cube</span>
<svg class="ic" style="left:80.5px;top:885.2px" width="20.0" height="19.0" viewBox="0 0 20 19" ><path d="M1,9.5 L5,7.5 H9.5 V3.2 L13,1 H17 L19,2.8 V18 H4 L1,16Z" fill="#fff" stroke="#555" stroke-width="1.2" stroke-linejoin="round"/><path d="M1,9.5 L4,11.5 V18 M4,11.5 H12.5 V4.8 L9.5,3.2 M12.5,4.8 H19 M12.5,11.5 L9.5,9.5" fill="none" stroke="#555" stroke-width="1.1" stroke-linejoin="round"/></svg>
<span id="t38" class="t" style="left:106.5px;top:885.4px;font-size:16.6px;line-height:21px;color:#333;font-weight:normal;font-style:normal;letter-spacing:-0.038px;">Tube 2&quot;x2&quot;x16&quot;</span>
<svg class="ic" style="left:80.5px;top:917.9px" width="20.0" height="19.0" viewBox="0 0 20 19" ><path d="M1,9.5 L5,7.5 H9.5 V3.2 L13,1 H17 L19,2.8 V18 H4 L1,16Z" fill="#fff" stroke="#555" stroke-width="1.2" stroke-linejoin="round"/><path d="M1,9.5 L4,11.5 V18 M4,11.5 H12.5 V4.8 L9.5,3.2 M12.5,4.8 H19 M12.5,11.5 L9.5,9.5" fill="none" stroke="#555" stroke-width="1.1" stroke-linejoin="round"/></svg>
<span id="t39" class="t" style="left:106.5px;top:918.1px;font-size:16.6px;line-height:21px;color:#333;font-weight:normal;font-style:normal;letter-spacing:-0.217px;">Tube 1.5&quot;x1.5&quot;x18&quot;</span>
<svg class="ic" style="left:80.5px;top:950.6px" width="20.0" height="19.0" viewBox="0 0 20 19" ><path d="M1,9.5 L5,7.5 H9.5 V3.2 L13,1 H17 L19,2.8 V18 H4 L1,16Z" fill="#fff" stroke="#555" stroke-width="1.2" stroke-linejoin="round"/><path d="M1,9.5 L4,11.5 V18 M4,11.5 H12.5 V4.8 L9.5,3.2 M12.5,4.8 H19 M12.5,11.5 L9.5,9.5" fill="none" stroke="#555" stroke-width="1.1" stroke-linejoin="round"/></svg>
<span id="t40" class="t" style="left:106.5px;top:950.8px;font-size:16.6px;line-height:21px;color:#333;font-weight:normal;font-style:normal;letter-spacing:-0.045px;">Crush Block</span>
<svg class="ic" style="left:80.5px;top:983.3px" width="20.0" height="19.0" viewBox="0 0 20 19" ><path d="M1,9.5 L5,7.5 H9.5 V3.2 L13,1 H17 L19,2.8 V18 H4 L1,16Z" fill="#fff" stroke="#555" stroke-width="1.2" stroke-linejoin="round"/><path d="M1,9.5 L4,11.5 V18 M4,11.5 H12.5 V4.8 L9.5,3.2 M12.5,4.8 H19 M12.5,11.5 L9.5,9.5" fill="none" stroke="#555" stroke-width="1.1" stroke-linejoin="round"/></svg>
<span id="t41" class="t" style="left:106.5px;top:983.5px;font-size:16.6px;line-height:21px;color:#333;font-weight:normal;font-style:normal;letter-spacing:-0.092px;">Climber Hook</span>
<svg class="ic" style="left:80.5px;top:1016.0px" width="20.0" height="19.0" viewBox="0 0 20 19" ><path d="M1,9.5 L5,7.5 H9.5 V3.2 L13,1 H17 L19,2.8 V18 H4 L1,16Z" fill="#fff" stroke="#555" stroke-width="1.2" stroke-linejoin="round"/><path d="M1,9.5 L4,11.5 V18 M4,11.5 H12.5 V4.8 L9.5,3.2 M12.5,4.8 H19 M12.5,11.5 L9.5,9.5" fill="none" stroke="#555" stroke-width="1.1" stroke-linejoin="round"/></svg>
<span id="t42" class="t" style="left:106.5px;top:1016.2px;font-size:16.6px;line-height:21px;color:#333;font-weight:normal;font-style:normal;letter-spacing:-0.344px;">Hook Spacer</span>
<div class="box" style="left:306px;top:643.5px;width:42px;height:43.5px;border:1.2px solid #c6c6c6;border-left:none;background:#fff"></div>
<svg class="ic" style="left:316.5px;top:655.5px" width="22.0" height="22.0" viewBox="0 0 22 22" ><path d="M6,3 H21 M6,8.3 H21 M6,13.6 H21 M6,19 H21" stroke="#2d2d2d" stroke-width="1.8"/><path d="M1,0.5 L4.5,3 L1,5.5Z" fill="#2d2d2d"/><path d="M1.5,8.3 H3.5 M1.5,13.6 H3.5 M1.5,19 H3.5" stroke="#2d2d2d" stroke-width="1.8"/></svg>
<div class="box" style="left:50px;top:1256.5px;width:42px;height:36px;background:#cfcfcf"></div>
<svg class="ic" style="left:61.0px;top:1265.0px" width="19.0" height="19.0" viewBox="0 0 19 19" ><path d="M9.5,1 V18 M1,9.5 H18" stroke="#555" stroke-width="3"/></svg>
<svg class="ic" style="left:92px;top:1256.5px" width="220" height="36" viewBox="0 0 220 36"><path d="M0,0.5 H43 L53,17.5 L43,35 H0Z" fill="#ebebeb"/><path d="M43,0.5 H203 L213.5,17.5 L203,35 H43 L53,17.5Z" fill="#fff"/><path d="M43,0.5 L53,17.5 L43,35" fill="none" stroke="#d0d0d0" stroke-width="1"/></svg>
<svg class="ic" style="left:103.0px;top:1262.0px" width="24.0" height="22.0" viewBox="0 0 24 22" ><path d="M12,1 L17.5,6 V2.5 H20.5 V8.7 L23.5,11.5 H20.5 V21.5 H14.5 V14 H9.5 V21.5 H3.5 V11.5 H0.5Z" fill="#666"/></svg>
<span id="t43" class="t" style="left:163.0px;top:1262.1px;font-size:17.0px;line-height:21px;color:#666;font-weight:normal;font-style:normal;letter-spacing:0.140px;">Exercise 4 - Tel</span>
<div class="box" style="left:308px;top:1257px;width:252px;height:32.8px;background:#ebebeb;border-radius:0 0 8px 8px"></div>
<svg class="ic" style="left:324.5px;top:1264.0px" width="17.0" height="17.0" viewBox="0 0 17 17" ><circle cx="8.5" cy="8.5" r="8.5" fill="#6e9fd8"/><path d="M8.5,3 V11 M4.7,8.3 L8.5,12.6 L12.3,8.3" fill="none" stroke="#fff" stroke-width="2.6"/></svg>
<svg class="ic" style="left:347.5px;top:1261.0px" width="23.0" height="23.0" viewBox="0 0 23 23" ><path d="M1.5,4.5 L5,1.5 H19.5 L22,4 V19 L19,22 H4.5 L1.5,19.5Z" fill="#fff" stroke="#333" stroke-width="1.3" stroke-linejoin="round"/><path d="M1.5,4.5 L5,1.5 H15 V12 L12,14.5 H1.5Z" fill="#999" stroke="#333" stroke-width="1.1"/><path d="M1.5,4.5 H12 V14.5 M12,4.5 L15,1.5 M4.5,14.5 V22 M15,12 H22" fill="none" stroke="#333" stroke-width="1.1"/></svg>
<span id="t44" class="t" style="left:375.2px;top:1263.6px;font-size:17.0px;line-height:21px;color:#666;font-weight:normal;font-style:normal;letter-spacing:0.203px;">Exercise 4 Assembly</span>
<div class="box" style="left:562px;top:1257px;width:249px;height:34.5px;background:#fff;border-bottom:3.5px solid #1a4fb3;border-radius:0 0 7px 7px"></div>
<svg class="ic" style="left:577.0px;top:1261.5px" width="22.0" height="23.0" viewBox="0 0 22 23" ><path d="M1.5,8 L3.5,6.5 H9 L10.5,8 V21.5 H3.5 L1.5,20Z" fill="#fff" stroke="#333" stroke-width="1.3" stroke-linejoin="round"/><path d="M1.5,8 L3.5,9.5 V21.5 M3.5,9.5 H10.5" fill="none" stroke="#333" stroke-width="1"/><path d="M10.5,3 L12.5,1.2 H18.5 L20.5,3 V21.5 H12.5 L10.5,20Z" fill="#fff" stroke="#333" stroke-width="1.3" stroke-linejoin="round"/><path d="M10.5,3 L12.5,4.6 V21.5 M12.5,4.6 H20.5" fill="none" stroke="#333" stroke-width="1"/></svg>
<span id="t45" class="t" style="left:603.5px;top:1263.6px;font-size:17.0px;line-height:21px;color:#333;font-weight:normal;font-style:normal;letter-spacing:0.028px;">Exercise 4 Part Studio</span>
<svg class="ic" style="left:2274.2px;top:1231.0px" width="21.0" height="16.0" viewBox="0 0 21 16" ><path d="M1,8.5 H13 C17,8.5 19.5,7 19.5,4.5 V11 C19.5,14 17,15 14,15 H1Z" fill="#fff" stroke="#222" stroke-width="1.5" stroke-linejoin="round"/><ellipse cx="13" cy="4.8" rx="6.5" ry="4" fill="#fff" stroke="#222" stroke-width="1.5"/><ellipse cx="13" cy="4.8" rx="3.2" ry="1.5" fill="none" stroke="#222" stroke-width="1.3"/><path d="M3.5,12 V14.5 M5.5,13 V14.5 M7.5,12 V14.5 M9.5,13 V14.5 M11.5,12 V14.5 M13.5,13 V14.5 M15.5,12 V14.5" stroke="#222" stroke-width=".8"/></svg>
<svg class="ic" style="left:2316.0px;top:1231.0px" width="25.0" height="16.0" viewBox="0 0 25 16" ><path d="M1,15 C1,6 6,1 12.5,1 C19,1 24,6 24,15Z" fill="#fff" stroke="#222" stroke-width="1.6" stroke-linejoin="round"/><path d="M6,12.3 C6,8 9,5.5 12.5,5.5 C16,5.5 19,8 19,12.3 H15 C14.5,10.5 13.5,10 12.5,10 C11.5,10 10.5,10.5 10,12.3Z" fill="none" stroke="#222" stroke-width="1.4"/><path d="M3,13 C3,7 7,3 12.5,3 C18,3 22,7 22,13" fill="none" stroke="#222" stroke-width="1" stroke-dasharray=".8 1.3"/></svg>
<svg class="ic" style="left:2363.5px;top:1229.5px" width="18.0" height="18.0" viewBox="0 0 18 18" ><path d="M3,0.8 H15 M9,0.8 V15.5" stroke="#222" stroke-width="1.6"/><path d="M0.5,16.8 H17.5" stroke="#222" stroke-width="2"/><path d="M3.5,1 L0.8,11.5 H6Z M14.5,1 L12,11.5 H17.2Z" fill="none" stroke="#222" stroke-width="1"/><path d="M0.5,11 H6.3 V12.3 H0.5Z M11.7,11 H17.5 V12.3 H11.7Z" fill="#222"/></svg>
<div class="box" style="left:2358px;top:534px;width:42px;height:167px;border:1.2px solid #b9b9b9;background:#fff"></div>
<div class="box" style="left:2358px;top:576.0px;width:40px;height:1.2px;background:#b9b9b9"></div>
<div class="box" style="left:2358px;top:617.0px;width:40px;height:1.2px;background:#b9b9b9"></div>
<div class="box" style="left:2358px;top:658.5px;width:40px;height:1.2px;background:#b9b9b9"></div>
<div class="box" style="left:2358px;top:712.5px;width:42px;height:84px;border:1.2px solid #b9b9b9;background:#fff"></div>
<div class="box" style="left:2358px;top:754px;width:40px;height:1.2px;background:#b9b9b9"></div>
<svg class="ic" style="left:2366.5px;top:544.5px" width="25.0" height="25.0" viewBox="0 0 25 25" ><path d="M13,1.5 L18,4 L14,16 H7Z" fill="#888"/><path d="M17.5,4.5 L22.5,8.5 L16,16 H12.5Z" fill="#b5b5b5"/><path d="M7,16 L13,1.5 L10.5,2.5 L4.5,16Z" fill="#666"/><rect x="1.5" y="15.8" width="22" height="7.5" rx="1.5" fill="#fff" stroke="#555" stroke-width="1.2"/><path d="M17,15.8 V23.3" stroke="#555" stroke-width="1"/><rect x="17" y="15.8" width="6.5" height="7.5" fill="#d0d0d0" stroke="#555" stroke-width="1"/><circle cx="5" cy="19.5" r="1.3" fill="none" stroke="#555" stroke-width=".9"/></svg>
<svg class="ic" style="left:2365.5px;top:585.5px" width="25.0" height="25.0" viewBox="0 0 25 25" ><path d="M14.5,8 L23,11.5 V20 L14.5,24 L6,20 V11.5Z" fill="#fff" stroke="#333" stroke-width="1.4" stroke-linejoin="round"/><path d="M6,11.5 L14.5,15.5 L23,11.5 M14.5,15.5 V24" fill="none" stroke="#333" stroke-width="1.4"/><rect x="0.5" y="0.5" width="11.5" height="11.5" fill="#1c58c4"/><path d="M4.3,0.5 v11.5 M8.2,0.5 v11.5 M0.5,4.3 h11.5 M0.5,8.2 h11.5" stroke="#fff" stroke-width=".9"/></svg>
<svg class="ic" style="left:2365.5px;top:626.0px" width="25.0" height="25.0" viewBox="0 0 25 25" ><path d="M14.5,9 L21,12 V19 L14.5,22.5 L8,19 V12Z" fill="#fff" stroke="#333" stroke-width="1.3" stroke-linejoin="round"/><path d="M8,12 L14.5,15.3 L21,12 M14.5,15.3 V22.5" fill="none" stroke="#333" stroke-width="1.3"/><path d="M5,9.5 C3,9.5 3.5,12 3.5,14 C3.5,15.5 3,16.3 2,16.8 C3,17.3 3.5,18 3.5,19.5 C3.5,21.5 3,24 5,24 M22,7 C24,7 23.5,9.5 23.5,12 C23.5,13.5 24,14.5 25,15 C24,15.5 23.5,16.5 23.5,18 C23.5,20.5 24,23.5 22,23.5" fill="none" stroke="#333" stroke-width="1.2"/><rect x="0.5" y="0.5" width="11.0" height="11.0" fill="#3a3a3a"/><path d="M4.2,0.5 v11.0 M7.8,0.5 v11.0 M0.5,4.2 h11.0 M0.5,7.8 h11.0" stroke="#fff" stroke-width=".9"/></svg>
<svg class="ic" style="left:2365.0px;top:667.0px" width="26.0" height="25.0" viewBox="0 0 26 25" ><path d="M4.5,11 C1.5,14 1.5,20 4.5,24 M22,8 C25.5,12 25.5,19 22,24" fill="none" stroke="#222" stroke-width="1.8"/><text x="7" y="22" font-size="19" font-style="italic" font-weight="bold" font-family="Liberation Serif, serif" fill="#222">x</text><rect x="0.5" y="0.5" width="11.0" height="11.0" fill="#3a3a3a"/><path d="M4.2,0.5 v11.0 M7.8,0.5 v11.0 M0.5,4.2 h11.0 M0.5,7.8 h11.0" stroke="#fff" stroke-width=".9"/></svg>
<div class="box" style="left:2364px;top:719px;width:30px;height:30px;background:#d9d9d9;border-radius:5px"></div>
<svg class="ic" style="left:2366.5px;top:721.5px" width="25.0" height="25.0" viewBox="0 0 25 25" ><path d="M12.5,12.5 L3.7,3.7 A12.5,12.5 0 0 1 21.3,3.7Z" fill="#7ac943"/><path d="M12.5,12.5 L21.3,3.7 A12.5,12.5 0 0 1 21.3,21.3Z" fill="#3fa9f5"/><path d="M12.5,12.5 L21.3,21.3 A12.5,12.5 0 0 1 3.7,21.3Z" fill="#f0b13d"/><path d="M12.5,12.5 L3.7,21.3 A12.5,12.5 0 0 1 3.7,3.7Z" fill="#d9403a"/></svg>
<div class="box" style="left:2364px;top:760.5px;width:30px;height:30px;background:#d9d9d9;border-radius:4px"></div>
<div class="box" style="left:2366.5px;top:763px;width:25px;height:25px;background:#0b57e6;border:1.5px solid #111"></div>
<span class="t" style="left:2368.3px;top:764px;font-size:15px;line-height:20px;color:#fff;font-weight:bold;font-family:'Liberation Serif',serif;transform:scale(0.82,1.45);transform-origin:0 55%;letter-spacing:-.3px">MK</span>
<svg class="ic" style="left:0;top:0" width="2398" height="330" viewBox="0 0 2398 330">
<g fill="#dfe6ee">
<path d="M2285.5,115 L2295,127 H2276Z"/><path d="M2285.5,302 L2295,290 H2276Z"/><path d="M2192,208.5 L2204,199.5 V217.5Z"/><path d="M2379,208.5 L2367,199.5 V217.5Z"/>
</g>
<g fill="none" stroke="#dfe6ee" stroke-width="6.5"><path d="M2259,128 Q2238,135 2224,149"/><path d="M2312,128 Q2333,135 2347,149"/></g>
<g fill="#dfe6ee"><path d="M2218.5,157 L2220,142 L2232,154Z"/><path d="M2352.5,157 L2351,142 L2339,154Z"/></g>
<path d="M2247,168 Q2240,172 2240,182 L2242,226 Q2242,232 2247,237 L2262,256 Q2266,261 2274,260 L2322,247 Q2331,245 2333,236 L2334,190 Q2334,182 2328,176 L2308,160 Q2302,155 2293,157 L2254,165Z" fill="#dfe6ee" opacity=".8"/>
<g fill="#fff">
<path d="M2258,170 L2294,162 Q2300,161 2305,165 L2318,176 Q2321,180 2316,183 L2280,192 Q2272,193 2267,189 L2255,177 Q2252,172 2258,170Z" opacity=".92"/>
<path d="M2284,208 L2318,199 Q2326,198 2326,205 L2325,232 Q2325,239 2318,241 L2284,251 Q2277,252 2277,245 L2277,216 Q2277,210 2284,208Z" opacity=".92"/>
<path d="M2244,186 L2259,203 Q2262,207 2262,213 L2262,243 Q2262,247 2258,243 L2246,229 Q2243,225 2243,219 L2242,189 Q2242,184 2244,186Z" opacity=".92"/>
<ellipse cx="2271.5" cy="201" rx="8" ry="7.5"/><ellipse cx="2325" cy="188" rx="4.5" ry="7.5" transform="rotate(-15 2325 188)"/><ellipse cx="2270" cy="254" rx="8" ry="3.5" transform="rotate(-12 2270 254)"/>
</g>
<path d="M2303.5,187 V200" stroke="#fff" stroke-width="1"/>
<text x="0" y="0" transform="matrix(0.93,-0.27,0,1,2285.5,235.5)" font-size="14.5" fill="#555" font-family="Liberation Sans, sans-serif">Right</text>
<text x="0" y="0" transform="matrix(0.5,0.62,0,1,2244.5,210.5)" font-size="12" fill="#888" font-family="Liberation Sans, sans-serif">Front</text>
<text x="0" y="0" transform="matrix(-0.55,-0.62,0.9,-0.22,2294,181.5)" font-size="12.5" fill="#777" font-family="Liberation Sans, sans-serif">Top</text>
<path d="M2234.7,168 V231.8" stroke="#3333e6" stroke-width="1.7"/><path d="M2234.7,231.8 L2265.6,265.8" stroke="#e03a3a" stroke-width="1.7"/><path d="M2234.7,231.8 L2301,216.5" stroke="#7ccf7c" stroke-width="1.3" opacity=".8"/><path d="M2234.7,231.8 L2243,229.9" stroke="#2eb82e" stroke-width="2"/>
<text transform="translate(2230.8,163.6) scale(0.82,1)" font-size="18" fill="#2f2fe0" stroke="#2f2fe0" stroke-width=".5" font-family="Liberation Sans, sans-serif">Z</text>
<text transform="translate(2265.3,277.6) scale(0.76,1)" font-size="18" fill="#e03a3a" stroke="#e03a3a" stroke-width=".5" font-family="Liberation Sans, sans-serif">X</text>
<text x="2308" y="219" font-size="14" fill="#a5dca5" font-family="Liberation Sans, sans-serif">Y</text>
</svg>
<svg class="ic" style="left:2329.5px;top:279.8px" width="23.0" height="23.0" viewBox="0 0 23 23" ><path d="M11.5,1 L22,5.5 V17 L11.5,22 L1,17 V5.5Z" fill="#fff" stroke="#333" stroke-width="1.2" stroke-linejoin="round"/><path d="M1,5.5 L11.5,10.5 V22 L1,17Z" fill="#9a9a9a" stroke="#333" stroke-width="1.2" stroke-linejoin="round"/><path d="M11.5,10.5 L22,5.5 V17 L11.5,22Z" fill="#d0d0d0" stroke="#333" stroke-width="1.2" stroke-linejoin="round"/></svg>
<svg class="ic" style="left:2363px;top:288.5px" width="10" height="5.5" viewBox="0 0 10 5.5"><path d="M0,0 H10 L5,5.5Z" fill="#222"/></svg>
<svg id="frame" width="2398" height="1294" viewBox="0 0 2398 1294"><path d="M0,0H2398V1294H0Z M0,1.4V1284.5A8,8 0 0 0 8,1292.5H2388.8A8,8 0 0 0 2396.8,1284.5V1.4Z" fill="#2e2e2e" fill-rule="evenodd"/><path d="M0,1286V1294H8A8,8 0 0 1 0,1286Z" fill="#1d5fc0"/></svg>
</body></html>
